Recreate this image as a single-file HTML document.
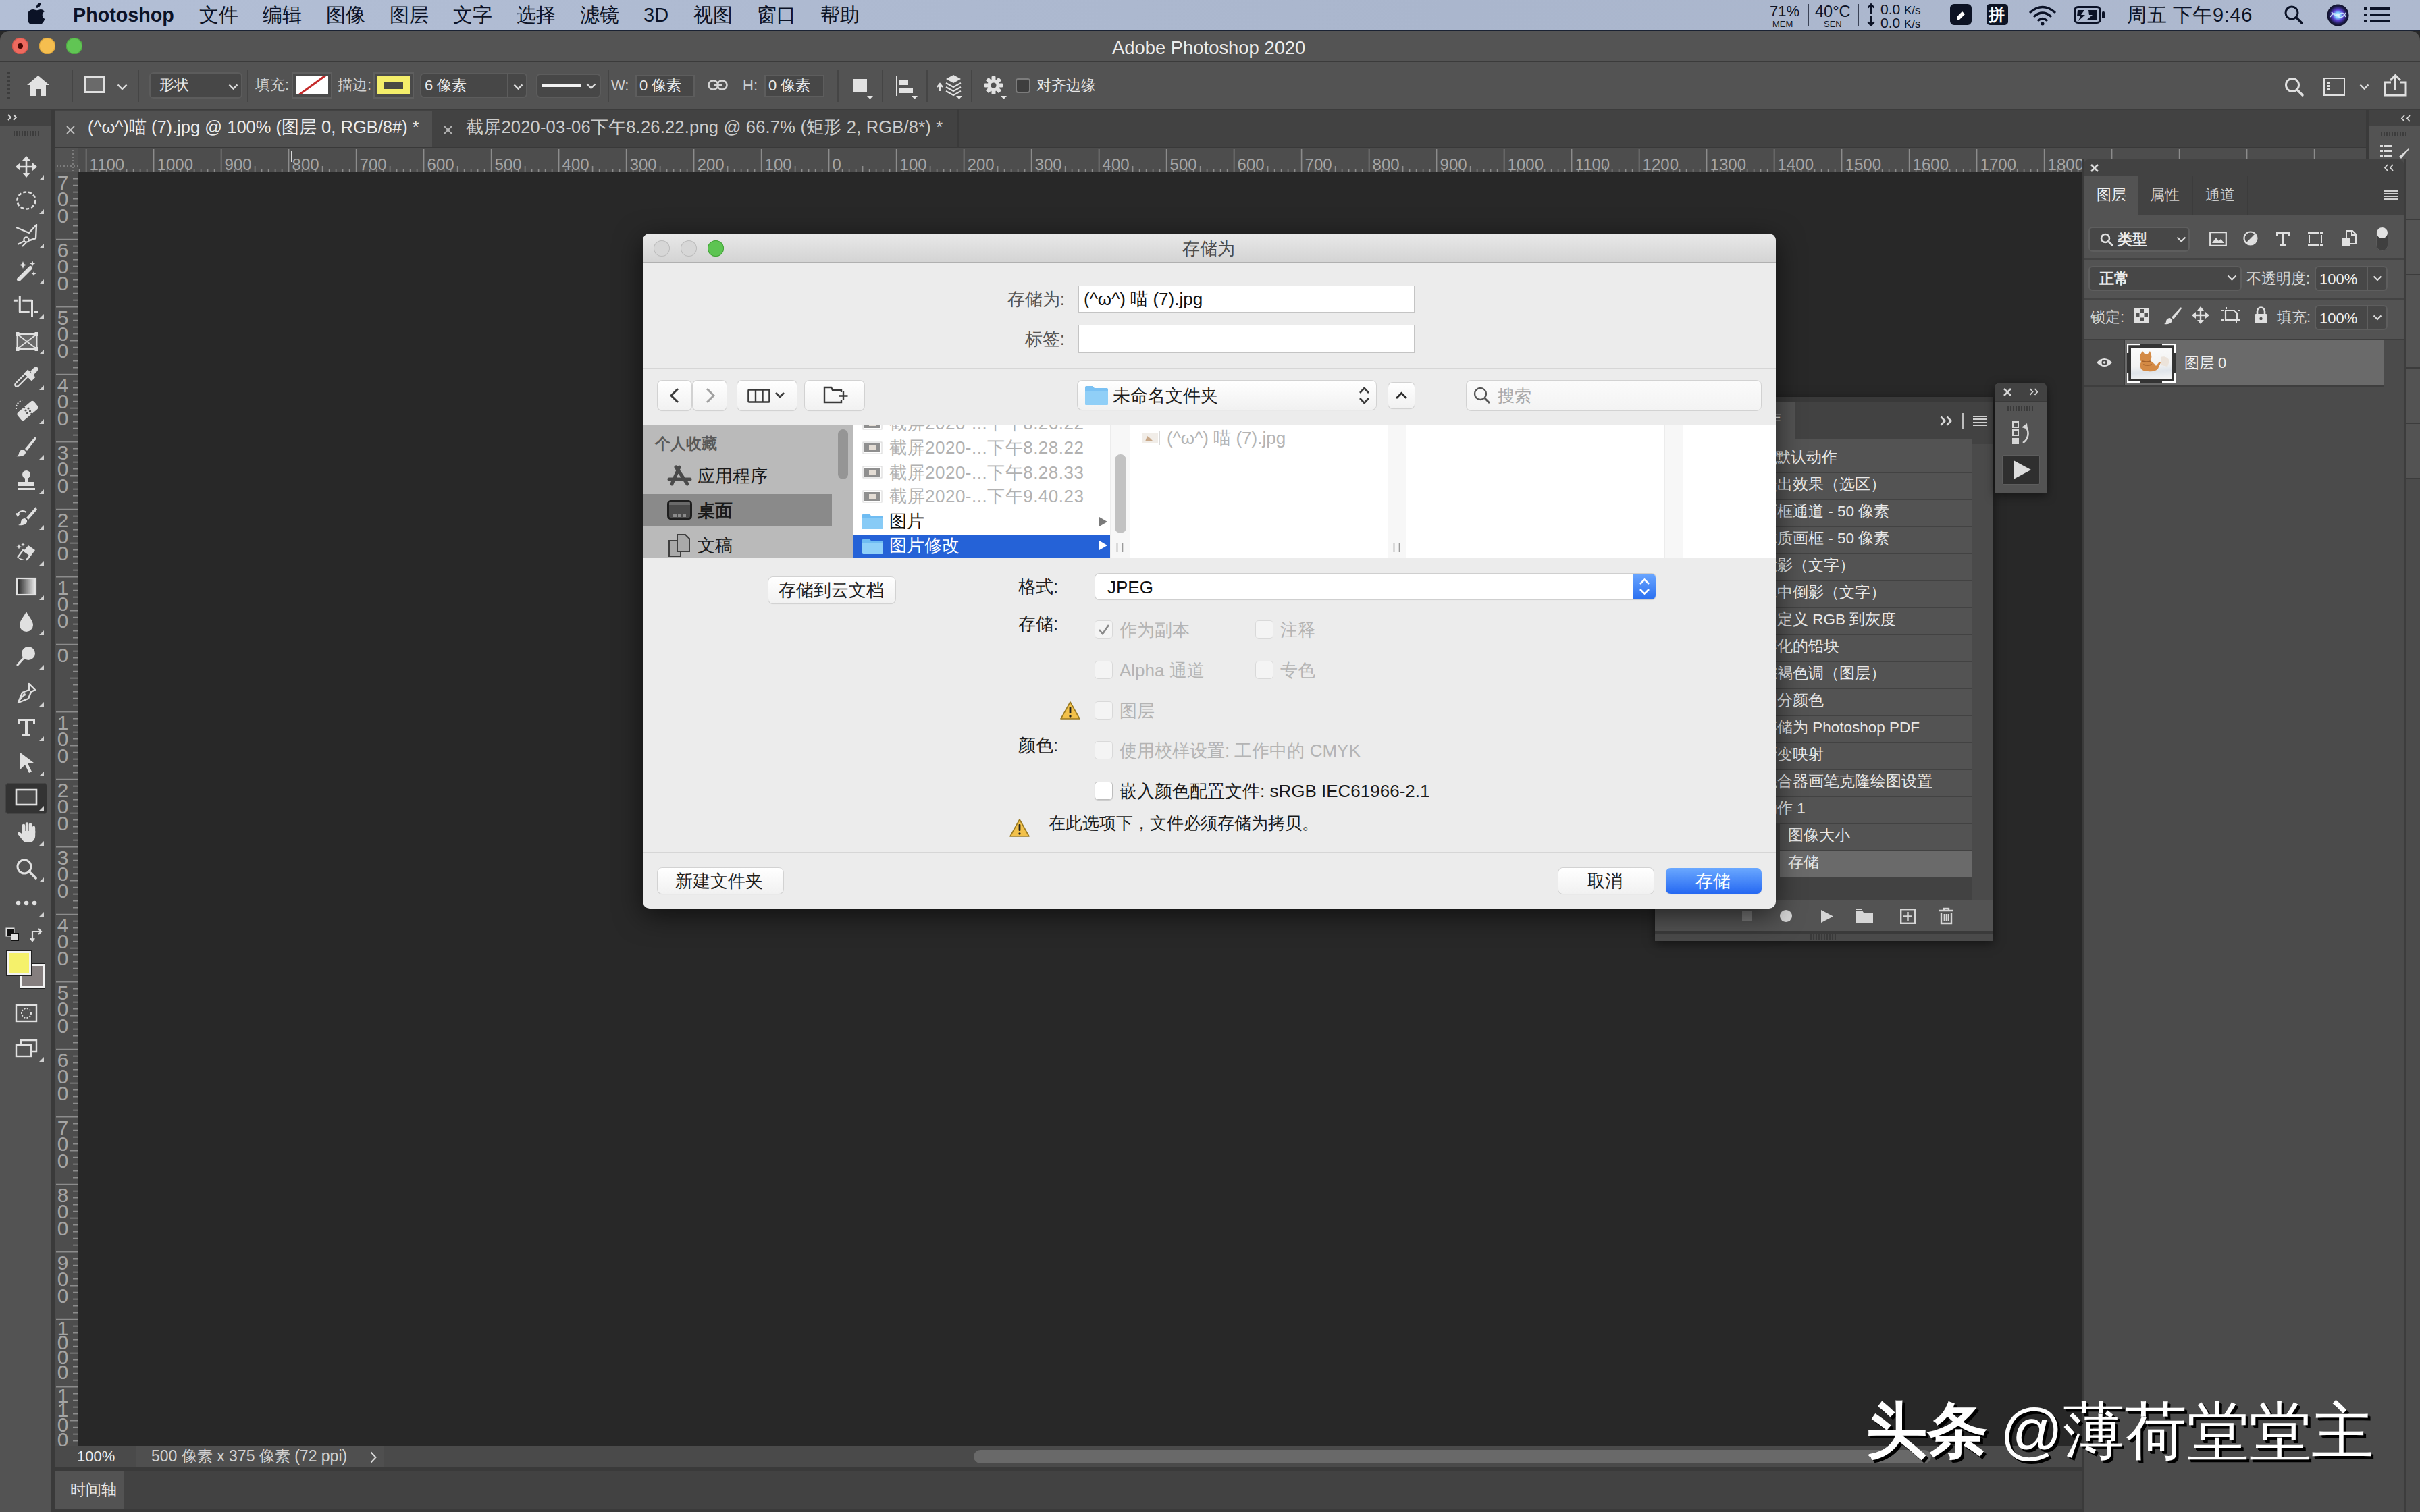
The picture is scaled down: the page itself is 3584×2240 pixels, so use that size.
<!DOCTYPE html>
<html><head><meta charset="utf-8">
<style>
html,body{margin:0;padding:0;width:3584px;height:2240px;overflow:hidden;background:#282828;font-family:"Liberation Sans",sans-serif;}
.a{position:absolute;}
.t{position:absolute;white-space:nowrap;line-height:1;}
/* menubar */
#menubar{left:0;top:0;width:3584px;height:44px;background:linear-gradient(90deg,#b3bfd6,#aab6cd 60%,#aeb9cf);}
#menubar .m{position:absolute;top:7px;font-size:29px;color:#0b1226;line-height:30px;}
/* ps window */
#titlebar{left:0;top:46px;width:3584px;height:45px;background:#545454;border-radius:14px 14px 0 0;}
#optbar{left:0;top:92px;width:3584px;height:70px;background:#535353;}
.sep{position:absolute;width:2px;background:#454545;}
.ddn{position:absolute;background:#474747;border:2px solid #5c5c5c;border-radius:6px;box-sizing:border-box;}
.ot{position:absolute;font-size:26px;color:#d9d9d9;line-height:1;white-space:nowrap;}
#toolbar{left:0;top:162px;width:76px;height:2078px;background:#535353;}
#tabbar{left:82px;top:162px;width:3422px;height:58px;background:#424242;}
#hruler{left:82px;top:220px;width:3422px;height:35px;background:#4d4d4d;}
#vruler{left:82px;top:255px;width:34px;height:1887px;background:#4d4d4d;}
#status{left:82px;top:2142px;width:3004px;height:32px;background:#4a4a4a;}
#timeline{left:82px;top:2180px;width:3004px;height:60px;background:#424242;}
#layers{left:3086px;top:236px;width:474px;height:2004px;background:#4b4b4b;box-shadow:-2px 0 0 #3a3a3a;}
#dock{left:3507px;top:163px;width:77px;height:2077px;background:#535353;}
#actions{left:2451px;top:588px;width:501px;height:806px;background:#535353;box-shadow:0 4px 14px rgba(0,0,0,.5);}
#mini{left:2954px;top:567px;width:77px;height:163px;background:#535353;border-radius:8px 8px 0 0;box-shadow:0 4px 14px rgba(0,0,0,.5);}
#dialog{left:952px;top:346px;width:1678px;height:1000px;background:#ececec;border-radius:10px;overflow:hidden;box-shadow:0 10px 40px rgba(0,0,0,.6);}
.dt{position:absolute;font-size:26px;line-height:1;white-space:nowrap;color:#1e1e1e;}
</style></head>
<body>
<div id="menubar" class="a">
<svg class="a" style="left:41px;top:4px" width="28" height="32" viewBox="0 0 28 32"><path fill="#0b1226" d="M19.5 0c.3 2-.5 4-1.7 5.4-1.2 1.4-3.1 2.5-5 2.3-.3-1.9.6-3.9 1.7-5.2C15.8 1.1 17.9.1 19.5 0zM26 23.3c-.8 1.8-1.2 2.6-2.2 4.2-1.4 2.2-3.4 4.9-5.9 4.9-2.2 0-2.8-1.4-5.8-1.4-3 0-3.7 1.5-5.9 1.4-2.5 0-4.4-2.4-5.8-4.6C-3.5 21.6-.4 13.5 3.6 11.2c1.4-.8 3-1.3 4.6-1.3 2.3 0 3.7 1.3 5.6 1.3 1.8 0 2.9-1.3 5.6-1.3 2 0 4.1 1.1 5.6 3-4.9 2.7-4.1 9.7 1 11.4z"/></svg>
<div class="m" style="left:108px;font-weight:bold;font-size:28.7px">Photoshop</div>
<div class="m" style="left:295px">文件</div>
<div class="m" style="left:389px">编辑</div>
<div class="m" style="left:483px">图像</div>
<div class="m" style="left:577px">图层</div>
<div class="m" style="left:671px">文字</div>
<div class="m" style="left:765px">选择</div>
<div class="m" style="left:859px">滤镜</div>
<div class="m" style="left:953px">3D</div>
<div class="m" style="left:1027px">视图</div>
<div class="m" style="left:1121px">窗口</div>
<div class="m" style="left:1215px">帮助</div>
<div class="t" style="left:2621px;top:6px;font-size:22px;color:#0b1226">71%</div>
<div class="t" style="left:2625px;top:29px;font-size:13px;color:#0b1226">MEM</div>
<div class="a" style="left:2678px;top:6px;width:1px;height:32px;background:#3a4256"></div>
<div class="t" style="left:2688px;top:6px;font-size:23.5px;color:#0b1226">40°C</div>
<div class="t" style="left:2701px;top:29px;font-size:13px;color:#0b1226">SEN</div>
<div class="a" style="left:2752px;top:6px;width:1px;height:32px;background:#3a4256"></div>
<svg class="a" style="left:2765px;top:5px" width="12" height="15" viewBox="0 0 12 15"><path d="M6 15V3M1.5 6.5L6 1.5l4.5 5" stroke="#0b1226" stroke-width="2.6" fill="none"/></svg>
<svg class="a" style="left:2765px;top:24px" width="12" height="15" viewBox="0 0 12 15"><path d="M6 0v12M1.5 8.5L6 13.5l4.5-5" stroke="#0b1226" stroke-width="2.6" fill="none"/></svg>
<div class="t" style="left:2785px;top:3px;font-size:21px;color:#0b1226">0.0 <span style="font-size:17px">K/s</span></div>
<div class="t" style="left:2785px;top:23px;font-size:21px;color:#0b1226">0.0 <span style="font-size:17px">K/s</span></div>
<div class="a" style="left:2888px;top:6px;width:32px;height:31px;background:#0d1324;border-radius:6px"></div>
<svg class="a" style="left:2894px;top:12px" width="20" height="20" viewBox="0 0 20 20"><path fill="#fff" d="M4 13l8-8 4 4-8 8H4z"/></svg>
<div class="a" style="left:2942px;top:6px;width:32px;height:31px;background:#0d1324;border-radius:5px"></div>
<div class="t" style="left:2945px;top:10px;font-size:24px;color:#fff;font-weight:bold">拼</div>
<svg class="a" style="left:3004px;top:8px" width="42" height="30" viewBox="0 0 42 30"><path fill="none" stroke="#0b1226" stroke-width="3.2" stroke-linecap="round" d="M3 10Q21-5 39 10M9 16Q21 6 33 16M15 22Q21 17 27 22"/><circle cx="21" cy="27" r="2.5" fill="#0b1226"/></svg>
<svg class="a" style="left:3071px;top:9px" width="47" height="26" viewBox="0 0 47 26"><rect x="1.5" y="1.5" width="38" height="23" rx="5" fill="none" stroke="#0b1226" stroke-width="3"/><rect x="42" y="8" width="4" height="10" rx="1.5" fill="#0b1226"/><path fill="#0b1226" d="M6 6h10l-5 7h6l-10 9 3-7H5zM22 6h12v14H20l8-7h-5z"/></svg>
<div class="m" style="left:3150px;top:7px;font-size:29px;letter-spacing:.6px">周五 下午9:46</div>
<svg class="a" style="left:3382px;top:7px" width="30" height="30" viewBox="0 0 30 30"><circle cx="12" cy="12" r="9" fill="none" stroke="#0b1226" stroke-width="3"/><path d="M19 19l8 8" stroke="#0b1226" stroke-width="3.4" stroke-linecap="round"/></svg>
<svg class="a" style="left:3446px;top:6px" width="33" height="33" viewBox="0 0 33 33"><defs><radialGradient id="sg" cx="50%" cy="50%" r="50%"><stop offset="0" stop-color="#ffffff"/><stop offset=".25" stop-color="#7fd0ff"/><stop offset=".5" stop-color="#5a3fd0"/><stop offset=".8" stop-color="#1c1b4a"/><stop offset="1" stop-color="#0d0f24"/></radialGradient></defs><circle cx="16.5" cy="16.5" r="16" fill="url(#sg)"/><path d="M5 19q6-9 11-2t12-4M7 12q7 8 12 3t9 4" stroke="#d9f3ff" stroke-width="1.6" fill="none" opacity=".85"/></svg>
<svg class="a" style="left:3501px;top:10px" width="40" height="24" viewBox="0 0 40 24"><g fill="#0b1226"><rect x="0" y="1" width="5" height="4"/><rect x="0" y="10" width="5" height="4"/><rect x="0" y="19" width="5" height="4"/><rect x="9" y="1" width="30" height="4"/><rect x="9" y="10" width="30" height="4"/><rect x="9" y="19" width="30" height="4"/></g></svg>
</div>
<div class="a" style="left:0;top:44px;width:3584px;height:2px;background:#1a2233"></div>
<div id="titlebar" class="a">
<div class="a" style="left:18px;top:10px;width:24px;height:24px;border-radius:50%;background:#ee6a5f;box-shadow:inset 0 0 0 1px #d4554b"></div>
<div class="a" style="left:26px;top:18px;width:8px;height:8px;border-radius:50%;background:#460804"></div>
<div class="a" style="left:58px;top:10px;width:24px;height:24px;border-radius:50%;background:#f5be4f;box-shadow:inset 0 0 0 1px #d9a23a"></div>
<div class="a" style="left:98px;top:10px;width:24px;height:24px;border-radius:50%;background:#61c554;box-shadow:inset 0 0 0 1px #4ea842"></div>
<div class="t" style="left:1647px;top:11px;font-size:27.4px;color:#ececec;line-height:27px">Adobe Photoshop 2020</div>
</div>
<div class="a" style="left:0;top:91px;width:3584px;height:1px;background:#3b3b3b"></div>
<div id="optbar" class="a">
<div class="a" style="left:11px;top:15px;width:4px;height:40px;background:repeating-linear-gradient(#3c3c3c 0 3px,transparent 3px 6px)"></div>
<svg class="a" style="left:40px;top:20px" width="33" height="30" viewBox="0 0 33 30"><path fill="#e2e2e2" d="M16.5 0L0 14h5v16h8V20h7v10h8V14h5z"/></svg>
<div class="sep" style="left:106px;top:11px;height:48px"></div>
<div class="a" style="left:124px;top:21px;width:31px;height:25px;box-sizing:border-box;border:3px solid #e0e0e0;background:#6a6a6a"></div>
<svg class="a" style="left:173px;top:32px" width="16" height="10" viewBox="0 0 16 10"><path d="M1.5 1.5l6.5 6.5 6.5-6.5" stroke="#dcdcdc" stroke-width="2.4" fill="none"/></svg>
<div class="sep" style="left:204px;top:11px;height:48px"></div>
<div class="ddn" style="left:221px;top:15px;width:138px;height:39px"></div>
<div class="ot" style="left:236px;top:23px;font-size:22px;color:#e6e6e6">形状</div>
<svg class="a" style="left:338px;top:32px" width="15" height="10" viewBox="0 0 15 10"><path d="M1.5 1.5l6 6 6-6" stroke="#dcdcdc" stroke-width="2.4" fill="none"/></svg>
<div class="sep" style="left:366px;top:11px;height:48px"></div>
<div class="ot" style="left:378px;top:23px;font-size:22px;color:#d0d0d0">填充:</div>
<div class="a" style="left:432px;top:15px;width:60px;height:39px;box-sizing:border-box;border:2px solid #5f5f5f;background:#4a4a4a"></div>
<div class="a" style="left:438px;top:21px;width:48px;height:27px;background:#fff;overflow:hidden"><div class="a" style="left:-4px;top:12px;width:56px;height:3px;background:#c42a2a;transform:rotate(-36deg)"></div></div>
<div class="ot" style="left:500px;top:23px;font-size:22px;color:#d0d0d0">描边:</div>
<div class="a" style="left:553px;top:15px;width:60px;height:39px;box-sizing:border-box;border:2px solid #5f5f5f;background:#4a4a4a"></div>
<div class="a" style="left:559px;top:21px;width:48px;height:27px;background:#f4ee6a"></div>
<div class="a" style="left:568px;top:30px;width:29px;height:10px;background:#4a4a44"></div>
<div class="a" style="left:571px;top:33px;width:23px;height:4px;background:#f4ee6a;opacity:.0"></div>
<div class="ddn" style="left:622px;top:16px;width:159px;height:37px"></div>
<div class="a" style="left:751px;top:18px;width:2px;height:33px;background:#5c5c5c"></div>
<div class="ot" style="left:629px;top:24px;font-size:22px;color:#ececec">6 像素</div>
<svg class="a" style="left:760px;top:32px" width="15" height="10" viewBox="0 0 15 10"><path d="M1.5 1.5l6 6 6-6" stroke="#dcdcdc" stroke-width="2.4" fill="none"/></svg>
<div class="ddn" style="left:794px;top:17px;width:96px;height:36px"></div>
<div class="a" style="left:802px;top:33px;width:58px;height:4px;background:#f2f2f2"></div>
<svg class="a" style="left:868px;top:31px" width="15" height="10" viewBox="0 0 15 10"><path d="M1.5 1.5l6 6 6-6" stroke="#dcdcdc" stroke-width="2.4" fill="none"/></svg>
<div class="sep" style="left:900px;top:11px;height:48px"></div>
<div class="ot" style="left:905px;top:24px;font-size:22px;color:#d0d0d0">W:</div>
<div class="a" style="left:941px;top:19px;width:88px;height:33px;box-sizing:border-box;border:2px solid #5d5d5d;background:#474747"></div>
<div class="ot" style="left:947px;top:24px;font-size:22px;color:#ececec">0 像素</div>
<svg class="a" style="left:1048px;top:118px;top:26px" width="30" height="16" viewBox="0 0 30 16"><g fill="none" stroke="#d6d6d6" stroke-width="2.6"><rect x="1.5" y="1.5" width="14" height="13" rx="6.5"/><rect x="14.5" y="1.5" width="14" height="13" rx="6.5"/></g><rect x="9" y="6.7" width="12" height="2.6" fill="#d6d6d6"/></svg>
<div class="ot" style="left:1100px;top:24px;font-size:22px;color:#d0d0d0">H:</div>
<div class="a" style="left:1132px;top:19px;width:89px;height:33px;box-sizing:border-box;border:2px solid #5d5d5d;background:#474747"></div>
<div class="ot" style="left:1138px;top:24px;font-size:22px;color:#ececec">0 像素</div>
<div class="sep" style="left:1240px;top:11px;height:48px"></div>
<div class="a" style="left:1264px;top:25px;width:20px;height:20px;background:#e2e2e2"></div>
<svg class="a" style="left:1284px;top:50px" width="9" height="5"><path d="M0 0h9L4.5 5z" fill="#e6e6e6"/></svg>
<div class="sep" style="left:1306px;top:11px;height:48px"></div>
<div class="a" style="left:1327px;top:20px;width:2px;height:30px;background:#e2e2e2"></div>
<div class="a" style="left:1331px;top:26px;width:14px;height:8px;background:#e2e2e2"></div>
<div class="a" style="left:1331px;top:38px;width:21px;height:8px;background:#e2e2e2"></div>
<svg class="a" style="left:1350px;top:50px" width="9" height="5"><path d="M0 0h9L4.5 5z" fill="#e6e6e6"/></svg>
<div class="sep" style="left:1372px;top:11px;height:48px"></div>
<svg class="a" style="left:1386px;top:18px" width="40" height="36" viewBox="0 0 40 36"><path d="M6 15v10M2 19l4-5 4 5" stroke="#e2e2e2" stroke-width="2.2" fill="none"/><path d="M26 1l11 6-11 6-11-6z" fill="#e2e2e2"/><path d="M15 13l11 6 11-6M15 19l11 6 11-6M15 25l11 6 11-6" stroke="#e2e2e2" stroke-width="2" fill="none"/></svg>
<svg class="a" style="left:1416px;top:50px" width="9" height="5"><path d="M0 0h9L4.5 5z" fill="#e6e6e6"/></svg>
<div class="sep" style="left:1438px;top:11px;height:48px"></div>
<svg class="a" style="left:1458px;top:21px" width="27" height="27" viewBox="0 0 27 27"><g fill="#e2e2e2"><circle cx="13.5" cy="13.5" r="9"/><rect x="10.5" y="0" width="6" height="27" rx="1"/><rect x="0" y="10.5" width="27" height="6" rx="1"/><rect x="10.5" y="0" width="6" height="27" rx="1" transform="rotate(45 13.5 13.5)"/><rect x="10.5" y="0" width="6" height="27" rx="1" transform="rotate(-45 13.5 13.5)"/></g><circle cx="13.5" cy="13.5" r="4" fill="#535353"/></svg>
<svg class="a" style="left:1482px;top:50px" width="9" height="5"><path d="M0 0h9L4.5 5z" fill="#e6e6e6"/></svg>
<div class="a" style="left:1504px;top:24px;width:22px;height:22px;box-sizing:border-box;border:2px solid #7c7c7c;border-radius:4px;background:#3e3e3e"></div>
<div class="ot" style="left:1535px;top:24px;font-size:22px;color:#e6e6e6">对齐边缘</div>
<svg class="a" style="left:3383px;top:22px" width="30" height="30" viewBox="0 0 30 30"><circle cx="12" cy="12" r="9.5" fill="none" stroke="#e0e0e0" stroke-width="3"/><path d="M19 19l8 8" stroke="#e0e0e0" stroke-width="3.4" stroke-linecap="round"/></svg>
<div class="a" style="left:3441px;top:23px;width:32px;height:27px;box-sizing:border-box;border:2.5px solid #e0e0e0"></div>
<div class="a" style="left:3446px;top:29px;width:4px;height:14px;background:repeating-linear-gradient(#e0e0e0 0 3px,transparent 3px 5px)"></div>
<svg class="a" style="left:3494px;top:32px" width="15" height="10" viewBox="0 0 15 10"><path d="M1.5 1.5l6 6 6-6" stroke="#dcdcdc" stroke-width="2.4" fill="none"/></svg>
<svg class="a" style="left:3530px;top:17px" width="35" height="34" viewBox="0 0 35 34"><path d="M11 13H2v19h31V13h-9" fill="none" stroke="#e0e0e0" stroke-width="3"/><path d="M17.5 24V3M10 10l7.5-7.5L25 10" fill="none" stroke="#e0e0e0" stroke-width="3"/></svg>
</div>
<div class="a" style="left:0;top:162px;width:3584px;height:2078px;background:#3a3a3a"></div>
<div id="toolbar" class="a">
<div class="a" style="left:0;top:0;width:76px;height:24px;background:#424242"></div>
<svg class="a" style="left:11px;top:7px" width="16" height="10" viewBox="0 0 16 10"><path d="M1 1l4 4-4 4M9 1l4 4-4 4" stroke="#dcdcdc" stroke-width="1.8" fill="none"/></svg>
<div class="a" style="left:4px;top:24px;width:1px;height:2054px;background:#4a4a4a"></div>
<div class="a" style="left:20px;top:32px;width:38px;height:7px;background:repeating-linear-gradient(90deg,#3c3c3c 0 2px,transparent 2px 4px)"></div>
<svg class="a" style="left:23px;top:69px" width="32" height="32" viewBox="0 0 32 32"><path d="M16 2v28M2 16h28" stroke="#e0e0e0" stroke-width="2.6"/><path d="M16 0l-6 7h12zM16 32l-6-7h12zM0 16l7-6v12zM32 16l-7-6v12z" fill="#e0e0e0"/></svg>
<svg class="a" style="left:58px;top:98px" width="7" height="7"><path d="M7 0v7H0z" fill="#cfcfcf"/></svg>
<svg class="a" style="left:23px;top:120px" width="32" height="30" viewBox="0 0 32 30"><ellipse cx="16" cy="15" rx="13.5" ry="12.5" fill="none" stroke="#e0e0e0" stroke-width="2.6" stroke-dasharray="5 3"/></svg>
<svg class="a" style="left:58px;top:148px" width="7" height="7"><path d="M7 0v7H0z" fill="#cfcfcf"/></svg>
<svg class="a" style="left:23px;top:170px" width="34" height="34" viewBox="0 0 34 34"><path d="M1 5l19 8L31 1l-1 20-12 4" fill="none" stroke="#e0e0e0" stroke-width="2.4" stroke-linejoin="round"/><circle cx="16" cy="23" r="3.6" fill="#535353" stroke="#e0e0e0" stroke-width="2.2"/><path d="M13 25l-10 5M16 27l-6 6" stroke="#e0e0e0" stroke-width="2.2"/></svg>
<svg class="a" style="left:58px;top:199px" width="7" height="7"><path d="M7 0v7H0z" fill="#cfcfcf"/></svg>
<svg class="a" style="left:23px;top:223px" width="32" height="32" viewBox="0 0 32 32"><path d="M5 29L22 12" stroke="#e0e0e0" stroke-width="6" stroke-linecap="round"/><path d="M11 2l1.5 4 4 1.5-4 1.5L11 13 9.5 9 5.5 7.5l4-1.5zM25 1l1.2 3 3 1.2-3 1.2L25 10l-1.2-3.6-3-1.2 3-1.2zM27 17l1 2.5 2.5 1-2.5 1L27 24l-1-2.5-2.5-1 2.5-1z" fill="#e0e0e0"/></svg>
<svg class="a" style="left:58px;top:252px" width="7" height="7"><path d="M7 0v7H0z" fill="#cfcfcf"/></svg>
<svg class="a" style="left:15px;top:274px" width="46" height="36" viewBox="0 0 46 36"><path d="M4.9 9.3H10.9M14.3 2.4V26H28.7M18.3 9.3H32.5V34M36 26H41.6" fill="none" stroke="#e0e0e0" stroke-width="3" stroke-linejoin="round"/></svg>
<svg class="a" style="left:58px;top:303px" width="7" height="7"><path d="M7 0v7H0z" fill="#cfcfcf"/></svg>
<svg class="a" style="left:15px;top:328px" width="46" height="32" viewBox="0 0 46 32"><rect x="10.5" y="5" width="29" height="22" fill="#6a6a6a" stroke="#e0e0e0" stroke-width="2"/><path d="M10.5 5l29 22M39.5 5l-29 22" stroke="#e0e0e0" stroke-width="1.8"/><g fill="#e0e0e0"><rect x="8" y="2" width="5.5" height="6"/><rect x="36.5" y="2" width="5.5" height="6"/><rect x="8" y="24" width="5.5" height="6"/><rect x="36.5" y="24" width="5.5" height="6"/></g></svg>
<svg class="a" style="left:58px;top:356px" width="7" height="7"><path d="M7 0v7H0z" fill="#cfcfcf"/></svg>
<svg class="a" style="left:15px;top:378px" width="46" height="36" viewBox="0 0 46 36"><path d="M29 15L13 31c-2 2-4 2-5 1s-1-3 1-5l16-16" fill="none" stroke="#e0e0e0" stroke-width="2.2"/><rect x="21" y="12" width="16" height="8" transform="rotate(45 29 16)" fill="#e0e0e0"/><path d="M30 10l5-5c2-2 5-2 6 0s0 4-2 6l-5 5z" fill="#e0e0e0"/></svg>
<svg class="a" style="left:58px;top:409px" width="7" height="7"><path d="M7 0v7H0z" fill="#cfcfcf"/></svg>
<svg class="a" style="left:22px;top:429px" width="36" height="34" viewBox="0 0 36 34"><rect x="3" y="10" width="32" height="15" rx="4" transform="rotate(-40 19 17.5)" fill="#e0e0e0"/><g fill="#535353"><circle cx="16" cy="17" r="1.6"/><circle cx="20" cy="14" r="1.6"/><circle cx="18.5" cy="21" r="1.6"/><circle cx="22.5" cy="18" r="1.6"/><circle cx="14" cy="13" r="1.3"/><circle cx="24.5" cy="22" r="1.3"/></g><path d="M2 15q-1-9 9-13" fill="none" stroke="#e0e0e0" stroke-width="2" stroke-dasharray="2 2.2"/></svg>
<svg class="a" style="left:58px;top:459px" width="7" height="7"><path d="M7 0v7H0z" fill="#cfcfcf"/></svg>
<svg class="a" style="left:23px;top:483px" width="32" height="32" viewBox="0 0 32 32"><path d="M29 2L14 20l3 3L31 5z" fill="#e0e0e0"/><path d="M12 21c-5 0-7 4-7 6s-2 3-4 4c7 1 15-1 14-7z" fill="#e0e0e0"/></svg>
<svg class="a" style="left:58px;top:512px" width="7" height="7"><path d="M7 0v7H0z" fill="#cfcfcf"/></svg>
<svg class="a" style="left:23px;top:534px" width="32" height="32" viewBox="0 0 32 32"><circle cx="16" cy="7" r="6" fill="#e0e0e0"/><path d="M14 12h4v6h10v6H4v-6h10z" fill="#e0e0e0"/><rect x="3" y="27" width="26" height="3" fill="#e0e0e0"/></svg>
<svg class="a" style="left:58px;top:563px" width="7" height="7"><path d="M7 0v7H0z" fill="#cfcfcf"/></svg>
<svg class="a" style="left:22px;top:587px" width="34" height="32" viewBox="0 0 34 32"><path d="M31 2L17 18l3 3L33 6z" fill="#e0e0e0"/><path d="M15 19c-5 0-6 4-6 6s-2 3-4 4c7 1 14-1 13-7z" fill="#e0e0e0"/><path d="M3 14q6-9 14-4" fill="none" stroke="#e0e0e0" stroke-width="2.2"/><path d="M1 11l3 6 4-5z" fill="#e0e0e0"/></svg>
<svg class="a" style="left:58px;top:616px" width="7" height="7"><path d="M7 0v7H0z" fill="#cfcfcf"/></svg>
<svg class="a" style="left:22px;top:641px" width="34" height="30" viewBox="0 0 34 30"><path d="M20 5l10 7-11 15H9l-5-4z" fill="#e0e0e0"/><path d="M4 23l8-11 10 7-5 8" fill="#535353" stroke="#e0e0e0" stroke-width="2.2"/><path d="M6 3l1 3 3 1-3 1-1 3-1-3-3-1 3-1zM12 1l.8 2 2 .8-2 .8-.8 2-.8-2-2-.8 2-.8z" fill="#e0e0e0"/></svg>
<svg class="a" style="left:58px;top:669px" width="7" height="7"><path d="M7 0v7H0z" fill="#cfcfcf"/></svg>
<svg class="a" style="left:23px;top:693px" width="32" height="28" viewBox="0 0 32 28"><defs><linearGradient id="gr1" x1="0" x2="1"><stop offset="0" stop-color="#202020"/><stop offset="1" stop-color="#f0f0f0"/></linearGradient></defs><rect x="2" y="2" width="28" height="24" fill="url(#gr1)" stroke="#e0e0e0" stroke-width="2.2"/></svg>
<svg class="a" style="left:58px;top:720px" width="7" height="7"><path d="M7 0v7H0z" fill="#cfcfcf"/></svg>
<svg class="a" style="left:26px;top:743px" width="26" height="32" viewBox="0 0 26 32"><path d="M13 1C10 8 3 14 3 21a10 10 0 0 0 20 0c0-7-7-13-10-20z" fill="#e0e0e0"/></svg>
<svg class="a" style="left:58px;top:772px" width="7" height="7"><path d="M7 0v7H0z" fill="#cfcfcf"/></svg>
<svg class="a" style="left:23px;top:794px" width="32" height="32" viewBox="0 0 32 32"><circle cx="19" cy="12" r="10" fill="#e0e0e0"/><path d="M13 18L3 29" stroke="#e0e0e0" stroke-width="3.2" stroke-linecap="round"/></svg>
<svg class="a" style="left:58px;top:823px" width="7" height="7"><path d="M7 0v7H0z" fill="#cfcfcf"/></svg>
<svg class="a" style="left:24px;top:849px" width="30" height="32" viewBox="0 0 30 32"><path d="M19 2l9 9-6 3-4 10-15 6 6-15 10-4z" fill="none" stroke="#e0e0e0" stroke-width="2.4" stroke-linejoin="round"/><circle cx="12" cy="18" r="2" fill="#e0e0e0"/><path d="M3 29l8-10" stroke="#e0e0e0" stroke-width="2"/></svg>
<svg class="a" style="left:58px;top:878px" width="7" height="7"><path d="M7 0v7H0z" fill="#cfcfcf"/></svg>
<svg class="a" style="left:24px;top:901px" width="30" height="30" viewBox="0 0 30 30"><path d="M2 2h26v8h-3V5H17v20h4v3H9v-3h4V5H5v5H2z" fill="#e0e0e0"/></svg>
<svg class="a" style="left:58px;top:929px" width="7" height="7"><path d="M7 0v7H0z" fill="#cfcfcf"/></svg>
<svg class="a" style="left:26px;top:952px" width="26" height="32" viewBox="0 0 26 32"><path d="M4 1l20 15-9 1 6 12-4 2-6-12-7 7z" fill="#e0e0e0"/></svg>
<svg class="a" style="left:58px;top:981px" width="7" height="7"><path d="M7 0v7H0z" fill="#cfcfcf"/></svg>
<div class="a" style="left:8px;top:998px;width:62px;height:46px;border-radius:5px;background:#333;box-shadow:inset 0 0 0 1px #454545"></div>
<svg class="a" style="left:22px;top:1006px" width="34" height="26" viewBox="0 0 34 26"><rect x="2" y="2" width="30" height="22" fill="#4a4a4a" stroke="#e0e0e0" stroke-width="2.6"/></svg>
<svg class="a" style="left:58px;top:1032px" width="7" height="7"><path d="M7 0v7H0z" fill="#cfcfcf"/></svg>
<svg class="a" style="left:24px;top:1055px" width="31" height="32" viewBox="0 0 31 32"><g stroke="#e0e0e0" stroke-width="4.4" stroke-linecap="round"><path d="M11 16V6M16 15V3.5M21 15V4.5M26 17V9"/></g><path d="M8.8 14H28.2v7c0 6-4 10-9 10h-3c-4 0-6-2-8-5L2.5 19c-1.2-2 1-4 3-3l3.3 2.5z" fill="#e0e0e0"/></svg>
<svg class="a" style="left:58px;top:1084px" width="7" height="7"><path d="M7 0v7H0z" fill="#cfcfcf"/></svg>
<svg class="a" style="left:23px;top:1109px" width="32" height="32" viewBox="0 0 32 32"><circle cx="13" cy="13" r="10" fill="none" stroke="#e0e0e0" stroke-width="3"/><path d="M20 20l10 10" stroke="#e0e0e0" stroke-width="3.6" stroke-linecap="round"/></svg>
<svg class="a" style="left:58px;top:1138px" width="7" height="7"><path d="M7 0v7H0z" fill="#cfcfcf"/></svg>
<svg class="a" style="left:22px;top:1172px" width="34" height="8" viewBox="0 0 34 8"><g fill="#e0e0e0"><circle cx="5" cy="4" r="3.3"/><circle cx="17" cy="4" r="3.3"/><circle cx="29" cy="4" r="3.3"/></g></svg>
<svg class="a" style="left:58px;top:1189px" width="7" height="7"><path d="M7 0v7H0z" fill="#cfcfcf"/></svg>
<div class="a" style="left:10px;top:1214px;width:10px;height:10px;background:#111;box-shadow:0 0 0 1.5px #e0e0e0"></div>
<div class="a" style="left:16px;top:1220px;width:10px;height:10px;background:#e0e0e0;border:1px solid #111"></div>
<svg class="a" style="left:44px;top:1212px" width="22" height="22" viewBox="0 0 22 22"><path d="M4 20V6h13M13 2l4 4-4 4M1 16l3 4 3-4" fill="none" stroke="#e0e0e0" stroke-width="2.2"/></svg>
<div class="a" style="left:30px;top:1266px;width:36px;height:36px;box-sizing:border-box;background:#857e7e;border:3px solid #f2f2f2;box-shadow:0 0 0 1px #222"></div>
<div class="a" style="left:10px;top:1247px;width:36px;height:36px;box-sizing:border-box;background:#f5f16b;border:3px solid #f2f2f2;box-shadow:0 0 0 1px #222"></div>
<svg class="a" style="left:22px;top:1325px" width="34" height="28" viewBox="0 0 34 28"><rect x="2" y="2" width="30" height="24" fill="none" stroke="#e0e0e0" stroke-width="2.4"/><circle cx="17" cy="14" r="7" fill="none" stroke="#e0e0e0" stroke-width="2" stroke-dasharray="2 2.2"/></svg>
<svg class="a" style="left:22px;top:1377px" width="34" height="28" viewBox="0 0 34 28"><rect x="2" y="9" width="22" height="17" fill="#535353" stroke="#e0e0e0" stroke-width="2.4"/><path d="M9 9V2h23v17h-8" fill="none" stroke="#e0e0e0" stroke-width="2.4"/></svg>
<svg class="a" style="left:58px;top:1404px" width="7" height="7"><path d="M7 0v7H0z" fill="#cfcfcf"/></svg>
</div>
<div id="tabbar" class="a">
<div class="a" style="left:-82px;top:-1px;width:3584px;height:2px;background:#3c3c3c"></div>
<div class="a" style="left:0;top:56px;width:3422px;height:2px;background:#393939"></div>
<div class="a" style="left:0;top:2px;width:558px;height:54px;background:#505050"></div>
<svg class="a" style="left:16px;top:24px" width="13" height="13" viewBox="0 0 13 13"><path d="M1 1l11 11M12 1L1 12" stroke="#bdbdbd" stroke-width="1.8"/></svg>
<div class="t" style="left:48px;top:14px;font-size:25.5px;color:#ececec">(^ω^)喵 (7).jpg @ 100% (图层 0, RGB/8#) *</div>
<svg class="a" style="left:575px;top:24px" width="13" height="13" viewBox="0 0 13 13"><path d="M1 1l11 11M12 1L1 12" stroke="#b5b5b5" stroke-width="1.8"/></svg>
<div class="t" style="left:608px;top:14px;font-size:25.5px;letter-spacing:.2px;color:#cdcdcd">截屏2020-03-06下午8.26.22.png @ 66.7% (矩形 2, RGB/8*) *</div>
<div class="a" style="left:1336px;top:0;width:2px;height:58px;background:#3a3a3a"></div>
</div>
<div id="hruler" class="a">
<div class="a" style="left:0;top:0;width:34px;height:35px;background:#535353"></div>
<svg class="a" style="left:0;top:0" width="34" height="35"><path d="M26 2v32M2 26h32" stroke="#8a8a8a" stroke-width="1.5" stroke-dasharray="2 3"/></svg>
<svg class="a" style="left:0;top:0" width="3422" height="35"><path d="M35.6 30v5M45.6 1v34M55.6 30v5M65.6 30v5M75.6 30v5M85.6 30v5M95.6 26v9M105.6 30v5M115.6 30v5M125.6 30v5M135.6 30v5M145.6 1v34M155.6 30v5M165.6 30v5M175.6 30v5M185.6 30v5M195.6 26v9M205.6 30v5M215.6 30v5M225.6 30v5M235.6 30v5M245.6 1v34M255.6 30v5M265.6 30v5M275.6 30v5M285.6 30v5M295.6 26v9M305.6 30v5M315.6 30v5M325.6 30v5M335.6 30v5M345.6 1v34M355.6 30v5M365.6 30v5M375.6 30v5M385.6 30v5M395.6 26v9M405.6 30v5M415.6 30v5M425.6 30v5M435.6 30v5M445.6 1v34M455.6 30v5M465.6 30v5M475.6 30v5M485.6 30v5M495.6 26v9M505.6 30v5M515.6 30v5M525.6 30v5M535.6 30v5M545.6 1v34M555.6 30v5M565.6 30v5M575.6 30v5M585.6 30v5M595.6 26v9M605.6 30v5M615.6 30v5M625.6 30v5M635.6 30v5M645.6 1v34M655.6 30v5M665.6 30v5M675.6 30v5M685.6 30v5M695.6 26v9M705.6 30v5M715.6 30v5M725.6 30v5M735.6 30v5M745.6 1v34M755.6 30v5M765.6 30v5M775.6 30v5M785.6 30v5M795.6 26v9M805.6 30v5M815.6 30v5M825.6 30v5M835.6 30v5M845.6 1v34M855.6 30v5M865.6 30v5M875.6 30v5M885.6 30v5M895.6 26v9M905.6 30v5M915.6 30v5M925.6 30v5M935.6 30v5M945.6 1v34M955.6 30v5M965.6 30v5M975.6 30v5M985.6 30v5M995.6 26v9M1005.6 30v5M1015.6 30v5M1025.6 30v5M1035.6 30v5M1045.6 1v34M1055.6 30v5M1065.6 30v5M1075.6 30v5M1085.6 30v5M1095.6 26v9M1105.6 30v5M1115.6 30v5M1125.6 30v5M1135.6 30v5M1145.6 1v34M1155.6 30v5M1165.6 30v5M1175.6 30v5M1185.6 30v5M1195.6 26v9M1205.6 30v5M1215.6 30v5M1225.6 30v5M1235.6 30v5M1245.6 1v34M1255.6 30v5M1265.6 30v5M1275.6 30v5M1285.6 30v5M1295.6 26v9M1305.6 30v5M1315.6 30v5M1325.6 30v5M1335.6 30v5M1345.6 1v34M1355.6 30v5M1365.6 30v5M1375.6 30v5M1385.6 30v5M1395.6 26v9M1405.6 30v5M1415.6 30v5M1425.6 30v5M1435.6 30v5M1445.6 1v34M1455.6 30v5M1465.6 30v5M1475.6 30v5M1485.6 30v5M1495.6 26v9M1505.6 30v5M1515.6 30v5M1525.6 30v5M1535.6 30v5M1545.6 1v34M1555.6 30v5M1565.6 30v5M1575.6 30v5M1585.6 30v5M1595.6 26v9M1605.6 30v5M1615.6 30v5M1625.6 30v5M1635.6 30v5M1645.6 1v34M1655.6 30v5M1665.6 30v5M1675.6 30v5M1685.6 30v5M1695.6 26v9M1705.6 30v5M1715.6 30v5M1725.6 30v5M1735.6 30v5M1745.6 1v34M1755.6 30v5M1765.6 30v5M1775.6 30v5M1785.6 30v5M1795.6 26v9M1805.6 30v5M1815.6 30v5M1825.6 30v5M1835.6 30v5M1845.6 1v34M1855.6 30v5M1865.6 30v5M1875.6 30v5M1885.6 30v5M1895.6 26v9M1905.6 30v5M1915.6 30v5M1925.6 30v5M1935.6 30v5M1945.6 1v34M1955.6 30v5M1965.6 30v5M1975.6 30v5M1985.6 30v5M1995.6 26v9M2005.6 30v5M2015.6 30v5M2025.6 30v5M2035.6 30v5M2045.6 1v34M2055.6 30v5M2065.6 30v5M2075.6 30v5M2085.6 30v5M2095.6 26v9M2105.6 30v5M2115.6 30v5M2125.6 30v5M2135.6 30v5M2145.6 1v34M2155.6 30v5M2165.6 30v5M2175.6 30v5M2185.6 30v5M2195.6 26v9M2205.6 30v5M2215.6 30v5M2225.6 30v5M2235.6 30v5M2245.6 1v34M2255.6 30v5M2265.6 30v5M2275.6 30v5M2285.6 30v5M2295.6 26v9M2305.6 30v5M2315.6 30v5M2325.6 30v5M2335.6 30v5M2345.6 1v34M2355.6 30v5M2365.6 30v5M2375.6 30v5M2385.6 30v5M2395.6 26v9M2405.6 30v5M2415.6 30v5M2425.6 30v5M2435.6 30v5M2445.6 1v34M2455.6 30v5M2465.6 30v5M2475.6 30v5M2485.6 30v5M2495.6 26v9M2505.6 30v5M2515.6 30v5M2525.6 30v5M2535.6 30v5M2545.6 1v34M2555.6 30v5M2565.6 30v5M2575.6 30v5M2585.6 30v5M2595.6 26v9M2605.6 30v5M2615.6 30v5M2625.6 30v5M2635.6 30v5M2645.6 1v34M2655.6 30v5M2665.6 30v5M2675.6 30v5M2685.6 30v5M2695.6 26v9M2705.6 30v5M2715.6 30v5M2725.6 30v5M2735.6 30v5M2745.6 1v34M2755.6 30v5M2765.6 30v5M2775.6 30v5M2785.6 30v5M2795.6 26v9M2805.6 30v5M2815.6 30v5M2825.6 30v5M2835.6 30v5M2845.6 1v34M2855.6 30v5M2865.6 30v5M2875.6 30v5M2885.6 30v5M2895.6 26v9M2905.6 30v5M2915.6 30v5M2925.6 30v5M2935.6 30v5M2945.6 1v34M2955.6 30v5M2965.6 30v5M2975.6 30v5M2985.6 30v5M2995.6 26v9M3005.6 30v5M3015.6 30v5M3025.6 30v5M3035.6 30v5M3045.6 1v34M3055.6 30v5M3065.6 30v5M3075.6 30v5M3085.6 30v5M3095.6 26v9M3105.6 30v5M3115.6 30v5M3125.6 30v5M3135.6 30v5M3145.6 1v34M3155.6 30v5M3165.6 30v5M3175.6 30v5M3185.6 30v5M3195.6 26v9M3205.6 30v5M3215.6 30v5M3225.6 30v5M3235.6 30v5M3245.6 1v34M3255.6 30v5M3265.6 30v5M3275.6 30v5M3285.6 30v5M3295.6 26v9M3305.6 30v5M3315.6 30v5M3325.6 30v5M3335.6 30v5M3345.6 1v34M3355.6 30v5M3365.6 30v5M3375.6 30v5M3385.6 30v5M3395.6 26v9M3405.6 30v5M3415.6 30v5" stroke="#8c8c8c" stroke-width="1.6"/></svg>
<div class="t" style="left:50.6px;top:12px;font-size:24px;color:#a5a5a5">1100</div><div class="t" style="left:150.6px;top:12px;font-size:24px;color:#a5a5a5">1000</div><div class="t" style="left:250.6px;top:12px;font-size:24px;color:#a5a5a5">900</div><div class="t" style="left:350.6px;top:12px;font-size:24px;color:#a5a5a5">800</div><div class="t" style="left:450.6px;top:12px;font-size:24px;color:#a5a5a5">700</div><div class="t" style="left:550.6px;top:12px;font-size:24px;color:#a5a5a5">600</div><div class="t" style="left:650.6px;top:12px;font-size:24px;color:#a5a5a5">500</div><div class="t" style="left:750.6px;top:12px;font-size:24px;color:#a5a5a5">400</div><div class="t" style="left:850.6px;top:12px;font-size:24px;color:#a5a5a5">300</div><div class="t" style="left:950.6px;top:12px;font-size:24px;color:#a5a5a5">200</div><div class="t" style="left:1050.6px;top:12px;font-size:24px;color:#a5a5a5">100</div><div class="t" style="left:1150.6px;top:12px;font-size:24px;color:#a5a5a5">0</div><div class="t" style="left:1250.6px;top:12px;font-size:24px;color:#a5a5a5">100</div><div class="t" style="left:1350.6px;top:12px;font-size:24px;color:#a5a5a5">200</div><div class="t" style="left:1450.6px;top:12px;font-size:24px;color:#a5a5a5">300</div><div class="t" style="left:1550.6px;top:12px;font-size:24px;color:#a5a5a5">400</div><div class="t" style="left:1650.6px;top:12px;font-size:24px;color:#a5a5a5">500</div><div class="t" style="left:1750.6px;top:12px;font-size:24px;color:#a5a5a5">600</div><div class="t" style="left:1850.6px;top:12px;font-size:24px;color:#a5a5a5">700</div><div class="t" style="left:1950.6px;top:12px;font-size:24px;color:#a5a5a5">800</div><div class="t" style="left:2050.6px;top:12px;font-size:24px;color:#a5a5a5">900</div><div class="t" style="left:2150.6px;top:12px;font-size:24px;color:#a5a5a5">1000</div><div class="t" style="left:2250.6px;top:12px;font-size:24px;color:#a5a5a5">1100</div><div class="t" style="left:2350.6px;top:12px;font-size:24px;color:#a5a5a5">1200</div><div class="t" style="left:2450.6px;top:12px;font-size:24px;color:#a5a5a5">1300</div><div class="t" style="left:2550.6px;top:12px;font-size:24px;color:#a5a5a5">1400</div><div class="t" style="left:2650.6px;top:12px;font-size:24px;color:#a5a5a5">1500</div><div class="t" style="left:2750.6px;top:12px;font-size:24px;color:#a5a5a5">1600</div><div class="t" style="left:2850.6px;top:12px;font-size:24px;color:#a5a5a5">1700</div><div class="t" style="left:2950.6px;top:12px;font-size:24px;color:#a5a5a5">1800</div><div class="t" style="left:3050.6px;top:12px;font-size:24px;color:#a5a5a5">1900</div><div class="t" style="left:3150.6px;top:12px;font-size:24px;color:#a5a5a5">2000</div><div class="t" style="left:3250.6px;top:12px;font-size:24px;color:#a5a5a5">2100</div><div class="t" style="left:3350.6px;top:12px;font-size:24px;color:#a5a5a5">2200</div>
<div class="a" style="left:349px;top:4px;width:2px;height:16px;background:#d8d8d8"></div>
</div>
<div id="vruler" class="a" style="overflow:hidden">
<svg class="a" style="left:0;top:0" width="34" height="1887"><path d="M26 9.6h8M26 19.6h8M26 29.6h8M26 39.6h8M22 49.6h12M26 59.6h8M26 69.6h8M26 79.6h8M26 89.6h8M1 99.6h33M26 109.6h8M26 119.6h8M26 129.6h8M26 139.6h8M22 149.6h12M26 159.6h8M26 169.6h8M26 179.6h8M26 189.6h8M1 199.6h33M26 209.6h8M26 219.6h8M26 229.6h8M26 239.6h8M22 249.6h12M26 259.6h8M26 269.6h8M26 279.6h8M26 289.6h8M1 299.6h33M26 309.6h8M26 319.6h8M26 329.6h8M26 339.6h8M22 349.6h12M26 359.6h8M26 369.6h8M26 379.6h8M26 389.6h8M1 399.6h33M26 409.6h8M26 419.6h8M26 429.6h8M26 439.6h8M22 449.6h12M26 459.6h8M26 469.6h8M26 479.6h8M26 489.6h8M1 499.6h33M26 509.6h8M26 519.6h8M26 529.6h8M26 539.6h8M22 549.6h12M26 559.6h8M26 569.6h8M26 579.6h8M26 589.6h8M1 599.6h33M26 609.6h8M26 619.6h8M26 629.6h8M26 639.6h8M22 649.6h12M26 659.6h8M26 669.6h8M26 679.6h8M26 689.6h8M1 699.6h33M26 709.6h8M26 719.6h8M26 729.6h8M26 739.6h8M22 749.6h12M26 759.6h8M26 769.6h8M26 779.6h8M26 789.6h8M1 799.6h33M26 809.6h8M26 819.6h8M26 829.6h8M26 839.6h8M22 849.6h12M26 859.6h8M26 869.6h8M26 879.6h8M26 889.6h8M1 899.6h33M26 909.6h8M26 919.6h8M26 929.6h8M26 939.6h8M22 949.6h12M26 959.6h8M26 969.6h8M26 979.6h8M26 989.6h8M1 999.6h33M26 1009.6h8M26 1019.6h8M26 1029.6h8M26 1039.6h8M22 1049.6h12M26 1059.6h8M26 1069.6h8M26 1079.6h8M26 1089.6h8M1 1099.6h33M26 1109.6h8M26 1119.6h8M26 1129.6h8M26 1139.6h8M22 1149.6h12M26 1159.6h8M26 1169.6h8M26 1179.6h8M26 1189.6h8M1 1199.6h33M26 1209.6h8M26 1219.6h8M26 1229.6h8M26 1239.6h8M22 1249.6h12M26 1259.6h8M26 1269.6h8M26 1279.6h8M26 1289.6h8M1 1299.6h33M26 1309.6h8M26 1319.6h8M26 1329.6h8M26 1339.6h8M22 1349.6h12M26 1359.6h8M26 1369.6h8M26 1379.6h8M26 1389.6h8M1 1399.6h33M26 1409.6h8M26 1419.6h8M26 1429.6h8M26 1439.6h8M22 1449.6h12M26 1459.6h8M26 1469.6h8M26 1479.6h8M26 1489.6h8M1 1499.6h33M26 1509.6h8M26 1519.6h8M26 1529.6h8M26 1539.6h8M22 1549.6h12M26 1559.6h8M26 1569.6h8M26 1579.6h8M26 1589.6h8M1 1599.6h33M26 1609.6h8M26 1619.6h8M26 1629.6h8M26 1639.6h8M22 1649.6h12M26 1659.6h8M26 1669.6h8M26 1679.6h8M26 1689.6h8M1 1699.6h33M26 1709.6h8M26 1719.6h8M26 1729.6h8M26 1739.6h8M22 1749.6h12M26 1759.6h8M26 1769.6h8M26 1779.6h8M26 1789.6h8M1 1799.6h33M26 1809.6h8M26 1819.6h8M26 1829.6h8M26 1839.6h8M22 1849.6h12M26 1859.6h8M26 1869.6h8M26 1879.6h8" stroke="#8c8c8c" stroke-width="1.6"/></svg>
<div class="t" style="left:0;top:4.1px;width:22px;text-align:center;font-size:30px;line-height:24px;color:#a5a5a5">7</div><div class="t" style="left:0;top:28.4px;width:22px;text-align:center;font-size:30px;line-height:24px;color:#a5a5a5">0</div><div class="t" style="left:0;top:52.7px;width:22px;text-align:center;font-size:30px;line-height:24px;color:#a5a5a5">0</div><div class="t" style="left:0;top:104.1px;width:22px;text-align:center;font-size:30px;line-height:24px;color:#a5a5a5">6</div><div class="t" style="left:0;top:128.4px;width:22px;text-align:center;font-size:30px;line-height:24px;color:#a5a5a5">0</div><div class="t" style="left:0;top:152.7px;width:22px;text-align:center;font-size:30px;line-height:24px;color:#a5a5a5">0</div><div class="t" style="left:0;top:204.1px;width:22px;text-align:center;font-size:30px;line-height:24px;color:#a5a5a5">5</div><div class="t" style="left:0;top:228.4px;width:22px;text-align:center;font-size:30px;line-height:24px;color:#a5a5a5">0</div><div class="t" style="left:0;top:252.7px;width:22px;text-align:center;font-size:30px;line-height:24px;color:#a5a5a5">0</div><div class="t" style="left:0;top:304.1px;width:22px;text-align:center;font-size:30px;line-height:24px;color:#a5a5a5">4</div><div class="t" style="left:0;top:328.4px;width:22px;text-align:center;font-size:30px;line-height:24px;color:#a5a5a5">0</div><div class="t" style="left:0;top:352.7px;width:22px;text-align:center;font-size:30px;line-height:24px;color:#a5a5a5">0</div><div class="t" style="left:0;top:404.1px;width:22px;text-align:center;font-size:30px;line-height:24px;color:#a5a5a5">3</div><div class="t" style="left:0;top:428.4px;width:22px;text-align:center;font-size:30px;line-height:24px;color:#a5a5a5">0</div><div class="t" style="left:0;top:452.7px;width:22px;text-align:center;font-size:30px;line-height:24px;color:#a5a5a5">0</div><div class="t" style="left:0;top:504.1px;width:22px;text-align:center;font-size:30px;line-height:24px;color:#a5a5a5">2</div><div class="t" style="left:0;top:528.4px;width:22px;text-align:center;font-size:30px;line-height:24px;color:#a5a5a5">0</div><div class="t" style="left:0;top:552.7px;width:22px;text-align:center;font-size:30px;line-height:24px;color:#a5a5a5">0</div><div class="t" style="left:0;top:604.1px;width:22px;text-align:center;font-size:30px;line-height:24px;color:#a5a5a5">1</div><div class="t" style="left:0;top:628.4px;width:22px;text-align:center;font-size:30px;line-height:24px;color:#a5a5a5">0</div><div class="t" style="left:0;top:652.7px;width:22px;text-align:center;font-size:30px;line-height:24px;color:#a5a5a5">0</div><div class="t" style="left:0;top:704.1px;width:22px;text-align:center;font-size:30px;line-height:24px;color:#a5a5a5">0</div><div class="t" style="left:0;top:804.1px;width:22px;text-align:center;font-size:30px;line-height:24px;color:#a5a5a5">1</div><div class="t" style="left:0;top:828.4px;width:22px;text-align:center;font-size:30px;line-height:24px;color:#a5a5a5">0</div><div class="t" style="left:0;top:852.7px;width:22px;text-align:center;font-size:30px;line-height:24px;color:#a5a5a5">0</div><div class="t" style="left:0;top:904.1px;width:22px;text-align:center;font-size:30px;line-height:24px;color:#a5a5a5">2</div><div class="t" style="left:0;top:928.4px;width:22px;text-align:center;font-size:30px;line-height:24px;color:#a5a5a5">0</div><div class="t" style="left:0;top:952.7px;width:22px;text-align:center;font-size:30px;line-height:24px;color:#a5a5a5">0</div><div class="t" style="left:0;top:1004.1px;width:22px;text-align:center;font-size:30px;line-height:24px;color:#a5a5a5">3</div><div class="t" style="left:0;top:1028.4px;width:22px;text-align:center;font-size:30px;line-height:24px;color:#a5a5a5">0</div><div class="t" style="left:0;top:1052.7px;width:22px;text-align:center;font-size:30px;line-height:24px;color:#a5a5a5">0</div><div class="t" style="left:0;top:1104.1px;width:22px;text-align:center;font-size:30px;line-height:24px;color:#a5a5a5">4</div><div class="t" style="left:0;top:1128.4px;width:22px;text-align:center;font-size:30px;line-height:24px;color:#a5a5a5">0</div><div class="t" style="left:0;top:1152.7px;width:22px;text-align:center;font-size:30px;line-height:24px;color:#a5a5a5">0</div><div class="t" style="left:0;top:1204.1px;width:22px;text-align:center;font-size:30px;line-height:24px;color:#a5a5a5">5</div><div class="t" style="left:0;top:1228.4px;width:22px;text-align:center;font-size:30px;line-height:24px;color:#a5a5a5">0</div><div class="t" style="left:0;top:1252.7px;width:22px;text-align:center;font-size:30px;line-height:24px;color:#a5a5a5">0</div><div class="t" style="left:0;top:1304.1px;width:22px;text-align:center;font-size:30px;line-height:24px;color:#a5a5a5">6</div><div class="t" style="left:0;top:1328.4px;width:22px;text-align:center;font-size:30px;line-height:24px;color:#a5a5a5">0</div><div class="t" style="left:0;top:1352.7px;width:22px;text-align:center;font-size:30px;line-height:24px;color:#a5a5a5">0</div><div class="t" style="left:0;top:1404.1px;width:22px;text-align:center;font-size:30px;line-height:24px;color:#a5a5a5">7</div><div class="t" style="left:0;top:1428.4px;width:22px;text-align:center;font-size:30px;line-height:24px;color:#a5a5a5">0</div><div class="t" style="left:0;top:1452.7px;width:22px;text-align:center;font-size:30px;line-height:24px;color:#a5a5a5">0</div><div class="t" style="left:0;top:1504.1px;width:22px;text-align:center;font-size:30px;line-height:24px;color:#a5a5a5">8</div><div class="t" style="left:0;top:1528.4px;width:22px;text-align:center;font-size:30px;line-height:24px;color:#a5a5a5">0</div><div class="t" style="left:0;top:1552.7px;width:22px;text-align:center;font-size:30px;line-height:24px;color:#a5a5a5">0</div><div class="t" style="left:0;top:1604.1px;width:22px;text-align:center;font-size:30px;line-height:24px;color:#a5a5a5">9</div><div class="t" style="left:0;top:1628.4px;width:22px;text-align:center;font-size:30px;line-height:24px;color:#a5a5a5">0</div><div class="t" style="left:0;top:1652.7px;width:22px;text-align:center;font-size:30px;line-height:24px;color:#a5a5a5">0</div><div class="t" style="left:0;top:1700.6px;width:22px;text-align:center;font-size:30px;line-height:24px;color:#a5a5a5">1</div><div class="t" style="left:0;top:1722.4px;width:22px;text-align:center;font-size:30px;line-height:24px;color:#a5a5a5">0</div><div class="t" style="left:0;top:1744.2px;width:22px;text-align:center;font-size:30px;line-height:24px;color:#a5a5a5">0</div><div class="t" style="left:0;top:1766.0px;width:22px;text-align:center;font-size:30px;line-height:24px;color:#a5a5a5">0</div><div class="t" style="left:0;top:1800.6px;width:22px;text-align:center;font-size:30px;line-height:24px;color:#a5a5a5">1</div><div class="t" style="left:0;top:1822.4px;width:22px;text-align:center;font-size:30px;line-height:24px;color:#a5a5a5">1</div><div class="t" style="left:0;top:1844.2px;width:22px;text-align:center;font-size:30px;line-height:24px;color:#a5a5a5">0</div><div class="t" style="left:0;top:1866.0px;width:22px;text-align:center;font-size:30px;line-height:24px;color:#a5a5a5">0</div>
</div>
<div class="a" style="left:116px;top:255px;width:2970px;height:1887px;background:#282828"></div>
<div id="status" class="a">
<div class="a" style="left:120px;top:0;width:366px;height:32px;background:#4f4f4f"></div>
<div class="t" style="left:32px;top:5px;font-size:22px;color:#ececec">100%</div>
<div class="t" style="left:142px;top:4px;font-size:23px;color:#d2d2d2">500 像素 x 375 像素 (72 ppi)</div>
<svg class="a" style="left:466px;top:8px" width="10" height="18" viewBox="0 0 10 18"><path d="M1.5 1.5l7 7.5-7 7.5" stroke="#d8d8d8" stroke-width="2" fill="none"/></svg>
<div class="a" style="left:1360px;top:6px;width:1418px;height:20px;border-radius:10px;background:#696969"></div>
</div>
<div id="timeline" class="a">
<div class="a" style="left:0;top:0;width:102px;height:56px;background:#535353"></div>
<div class="t" style="left:22px;top:16px;font-size:23px;color:#e6e6e6">时间轴</div>
<div class="a" style="left:0;top:56px;width:3004px;height:4px;background:#3a3a3a"></div>
</div>
<div id="dock" class="a">
<div class="a" style="left:0;top:0;width:77px;height:24px;background:#424242"></div>
<svg class="a" style="left:48px;top:7px" width="16" height="11" viewBox="0 0 16 11"><path d="M6 1L2 5.5 6 10M14 1l-4 4.5 4 4.5" stroke="#dadada" stroke-width="1.8" fill="none"/></svg>
<div class="a" style="left:0;top:0;width:2px;height:2077px;background:#3a3a3a"></div>
<div class="a" style="left:19px;top:32px;width:38px;height:7px;background:repeating-linear-gradient(90deg,#3c3c3c 0 2px,transparent 2px 4px)"></div>
<svg class="a" style="left:18px;top:52px" width="17" height="17" viewBox="0 0 17 17"><g fill="#dcdcdc"><rect x="0" y="0" width="4" height="3"/><rect x="0" y="7" width="4" height="3"/><rect x="0" y="14" width="4" height="3"/><rect x="6" y="0" width="11" height="3"/><rect x="6" y="7" width="11" height="3"/><rect x="6" y="14" width="11" height="3"/></g></svg>
<svg class="a" style="left:40px;top:57px" width="20" height="18" viewBox="0 0 20 18"><path d="M20 0L6 12l3 3L20 2z" fill="#dcdcdc"/></svg>
<div class="a" style="left:2px;top:161px;width:75px;height:2px;background:#3c3c3c"></div>
<div class="a" style="left:2px;top:243px;width:75px;height:2px;background:#3c3c3c"></div>
<div class="a" style="left:2px;top:381px;width:75px;height:2px;background:#3c3c3c"></div>
<div class="a" style="left:2px;top:463px;width:75px;height:2px;background:#3c3c3c"></div>
<div class="a" style="left:2px;top:545px;width:75px;height:2px;background:#3c3c3c"></div>
<div class="a" style="left:2px;top:547px;width:75px;height:1530px;background:#4b4b4b"></div><div class="a" style="left:53px;top:73px;width:4px;height:2004px;background:#3d3d3d"></div>
</div>
<div id="layers" class="a">
<div class="a" style="left:0;top:0;width:474px;height:25px;background:#424242;border-radius:8px 8px 0 0"></div>
<svg class="a" style="left:9px;top:6px" width="14" height="14" viewBox="0 0 14 14"><path d="M2 2l10 10M12 2L2 12" stroke="#dadada" stroke-width="2.6"/></svg>
<svg class="a" style="left:444px;top:7px" width="16" height="11" viewBox="0 0 16 11"><path d="M6 1L2 5.5 6 10M14 1l-4 4.5 4 4.5" stroke="#dadada" stroke-width="1.8" fill="none"/></svg>
<div class="a" style="left:0;top:25px;width:474px;height:57px;background:#424242"></div>
<div class="a" style="left:0;top:25px;width:80px;height:57px;background:#535353"></div>
<div class="a" style="left:160px;top:25px;width:2px;height:57px;background:#3c3c3c"></div>
<div class="a" style="left:242px;top:25px;width:2px;height:57px;background:#3c3c3c"></div>
<div class="t" style="left:19px;top:42px;font-size:22px;color:#f0f0f0">图层</div>
<div class="t" style="left:98px;top:42px;font-size:22px;color:#cfcfcf">属性</div>
<div class="t" style="left:180px;top:42px;font-size:22px;color:#cfcfcf">通道</div>
<div class="a" style="left:444px;top:46px;width:21px;height:14px;background:repeating-linear-gradient(#d0d0d0 0 2px,transparent 2px 4px)"></div>
<div class="a" style="left:0;top:82px;width:474px;height:64px;background:#535353"></div>
<div class="a" style="left:0;top:146px;width:474px;height:3px;background:#434343"></div>
<div class="a" style="left:0;top:149px;width:474px;height:56px;background:#535353"></div>
<div class="a" style="left:0;top:205px;width:474px;height:3px;background:#434343"></div>
<div class="a" style="left:0;top:208px;width:474px;height:58px;background:#535353"></div>
<div class="ddn" style="left:7px;top:100px;width:150px;height:37px;background:#474747;border-color:#5e5e5e"></div>
<svg class="a" style="left:24px;top:109px" width="20" height="21" viewBox="0 0 20 21"><circle cx="8" cy="8" r="6" fill="none" stroke="#e0e0e0" stroke-width="2.6"/><path d="M12.5 12.5l6 6" stroke="#e0e0e0" stroke-width="3" stroke-linecap="round"/></svg>
<div class="t" style="left:50px;top:108px;font-size:22px;color:#ececec;font-weight:bold">类型</div>
<svg class="a" style="left:137px;top:114px" width="15" height="10" viewBox="0 0 15 10"><path d="M1.5 1.5l6 6 6-6" stroke="#dcdcdc" stroke-width="2.2" fill="none"/></svg>
<svg class="a" style="left:186px;top:107px" width="26" height="22" viewBox="0 0 26 22"><rect x="1.2" y="1.2" width="23.6" height="19.6" fill="none" stroke="#e0e0e0" stroke-width="2.2"/><path d="M4 17l6-8 4 5 3-3 5 6z" fill="#e0e0e0"/></svg>
<svg class="a" style="left:236px;top:106px" width="22" height="22" viewBox="0 0 22 22"><circle cx="11" cy="11" r="9.5" fill="none" stroke="#e0e0e0" stroke-width="2.2"/><path d="M17.7 4.3A9.5 9.5 0 0 1 4.3 17.7z" fill="#e0e0e0"/></svg>
<svg class="a" style="left:284px;top:107px" width="22" height="22" viewBox="0 0 22 22"><path d="M1 1h20v6h-2V3.5h-6.5v15.5h3v2h-9v-2h3V3.5H3V7H1z" fill="#e0e0e0"/></svg>
<svg class="a" style="left:331px;top:106px" width="24" height="24" viewBox="0 0 24 24"><rect x="3" y="3" width="18" height="18" fill="none" stroke="#e0e0e0" stroke-width="2"/><g fill="#e0e0e0" stroke="#535353" stroke-width="1"><rect x=".5" y=".5" width="5" height="5"/><rect x="18.5" y=".5" width="5" height="5"/><rect x=".5" y="18.5" width="5" height="5"/><rect x="18.5" y="18.5" width="5" height="5"/></g></svg>
<svg class="a" style="left:382px;top:105px" width="22" height="25" viewBox="0 0 22 25"><path d="M7 1h9l5 5v14H7z" fill="none" stroke="#e0e0e0" stroke-width="2"/><path d="M15 1v6h6" fill="none" stroke="#e0e0e0" stroke-width="2"/><rect x="1" y="12" width="11" height="12" fill="#e0e0e0"/></svg>
<div class="a" style="left:433px;top:100px;width:18px;height:36px;border-radius:9px;background:#3f3f3f;box-shadow:inset 0 0 0 1px #5c5c5c"></div>
<div class="a" style="left:434px;top:101px;width:16px;height:16px;border-radius:50%;background:#e2e2e2"></div>
<div class="ddn" style="left:7px;top:158px;width:227px;height:37px;background:#474747;border-color:#5e5e5e"></div>
<div class="t" style="left:23px;top:166px;font-size:22px;color:#ececec;font-weight:bold">正常</div>
<svg class="a" style="left:212px;top:171px" width="15" height="10" viewBox="0 0 15 10"><path d="M1.5 1.5l6 6 6-6" stroke="#dcdcdc" stroke-width="2.2" fill="none"/></svg>
<div class="t" style="left:241px;top:166px;font-size:22px;color:#d6d6d6">不透明度:</div>
<div class="ddn" style="left:342px;top:158px;width:108px;height:37px;background:#474747;border-color:#5e5e5e"></div>
<div class="a" style="left:419px;top:160px;width:2px;height:33px;background:#5e5e5e"></div>
<div class="t" style="left:349px;top:167px;font-size:22px;color:#f0f0f0">100%</div>
<svg class="a" style="left:428px;top:172px" width="14" height="9" viewBox="0 0 14 9"><path d="M1.5 1.5l5.5 5.5 5.5-5.5" stroke="#dcdcdc" stroke-width="2.2" fill="none"/></svg>
<div class="t" style="left:10px;top:223px;font-size:22px;color:#d6d6d6">锁定:</div>
<svg class="a" style="left:75px;top:220px" width="22" height="22" viewBox="0 0 22 22"><rect x="1" y="1" width="20" height="20" fill="none" stroke="#e0e0e0" stroke-width="2"/><g fill="#e0e0e0"><rect x="1" y="1" width="7" height="7"/><rect x="14" y="1" width="7" height="7"/><rect x="7.5" y="7.5" width="7" height="7"/><rect x="1" y="14" width="7" height="7"/><rect x="14" y="14" width="7" height="7"/></g></svg>
<svg class="a" style="left:119px;top:218px" width="26" height="27" viewBox="0 0 26 27"><path d="M25 1L11 16l3 3L26 3z" fill="#e0e0e0"/><path d="M9 17c-4 0-6 3-6 5s-1 3-3 4c6 1 12-1 12-6z" fill="#e0e0e0"/></svg>
<svg class="a" style="left:160px;top:218px" width="26" height="26" viewBox="0 0 26 26"><path d="M13 3v20M3 13h20" stroke="#e0e0e0" stroke-width="2.4"/><path d="M13 0l-5 6h10zM13 26l-5-6h10zM0 13l6-5v10zM26 13l-6-5v10z" fill="#e0e0e0"/></svg>
<svg class="a" style="left:204px;top:219px" width="28" height="24" viewBox="0 0 28 24"><path d="M6 5h13l4 4v10H6z" fill="none" stroke="#e0e0e0" stroke-width="2.2"/><g fill="#e0e0e0"><rect x="0" y="4" width="3" height="2"/><rect x="6" y="0" width="2" height="3"/><rect x="25" y="18" width="3" height="2"/><rect x="21" y="21" width="2" height="3"/><rect x="0" y="18" width="3" height="2"/><rect x="25" y="4" width="3" height="2"/></g></svg>
<svg class="a" style="left:252px;top:217px" width="21" height="27" viewBox="0 0 21 27"><path d="M5 12V8a5.5 5.5 0 0 1 11 0v4" fill="none" stroke="#e0e0e0" stroke-width="2.6"/><rect x="1" y="12" width="19" height="14" rx="2" fill="#e0e0e0"/><circle cx="10.5" cy="19" r="2.2" fill="#535353"/></svg>
<div class="t" style="left:286px;top:223px;font-size:22px;color:#d6d6d6">填充:</div>
<div class="ddn" style="left:342px;top:216px;width:108px;height:37px;background:#474747;border-color:#5e5e5e"></div>
<div class="a" style="left:419px;top:218px;width:2px;height:33px;background:#5e5e5e"></div>
<div class="t" style="left:349px;top:225px;font-size:22px;color:#f0f0f0">100%</div>
<svg class="a" style="left:428px;top:230px" width="14" height="9" viewBox="0 0 14 9"><path d="M1.5 1.5l5.5 5.5 5.5-5.5" stroke="#dcdcdc" stroke-width="2.2" fill="none"/></svg>
<div class="a" style="left:0;top:266px;width:474px;height:2px;background:#3e3e3e"></div>
<div class="a" style="left:61px;top:268px;width:383px;height:67px;background:#6a6a6a"></div>
<div class="a" style="left:0;top:335px;width:444px;height:2px;background:#3e3e3e"></div>
<div class="a" style="left:60px;top:268px;width:1px;height:67px;background:#3e3e3e"></div>
<svg class="a" style="left:18px;top:293px" width="25" height="16" viewBox="0 0 25 16"><path d="M1 8Q12.5-4 24 8 12.5 20 1 8z" fill="#e0e0e0"/><circle cx="12.5" cy="8" r="4" fill="#484848"/><circle cx="12.5" cy="8" r="1.8" fill="#e0e0e0"/></svg>
<div class="a" style="left:64px;top:273px;width:72px;height:58px;background:#333"></div>
<div class="a" style="left:70px;top:279px;width:61px;height:46px;background:linear-gradient(175deg,#fbfbfb 0%,#f2f2f2 55%,#dfe4ea 75%,#f5f5f5 100%)"></div>
<svg class="a" style="left:70px;top:279px" width="61" height="46" viewBox="0 0 61 46"><path d="M14 10l3-5 3 4h5l3-4 2 6c1 3 0 6-2 8 3 2 6 4 9 8l5-6 2 1-4 9c-3 4-9 5-15 4-6 0-10-2-11-6-1-3 0-6 1-8-2-3-2-7-1-11z" fill="#d48a45"/><path d="M17 20q6 2 12 0M18 25q6 2 13 0" stroke="#a5602a" stroke-width="1.5" fill="none"/><path d="M44 14c5-2 11 0 13 6l-3 8-9-2z" fill="#ece3da"/></svg>
<svg class="a" style="left:64px;top:273px" width="72" height="58" viewBox="0 0 72 58"><path d="M1 14V1h19M52 1h19v13M71 44v13H52M20 57H1V44" fill="none" stroke="#fff" stroke-width="2.4"/></svg>
<div class="t" style="left:149px;top:291px;font-size:22px;color:#f0f0f0">图层 0</div>

</div>
<div id="actions" class="a"><div class="a" style="left:0;top:0;width:501px;height:7px;background:#393939"></div>
<div class="a" style="left:0;top:7px;width:501px;height:56px;background:#424242"></div>
<div class="a" style="left:0;top:7px;width:208px;height:58px;background:#535353"></div>
<div class="t" style="left:141px;top:19px;font-size:22.5px;line-height:26px;color:#e6e6e6">动作</div>
<svg class="a" style="left:422px;top:28px" width="19" height="15" viewBox="0 0 19 15"><path d="M1.5 1.5l6 6-6 6M10.5 1.5l6 6-6 6" stroke="#d8d8d8" stroke-width="2.6" fill="none"/></svg>
<div class="a" style="left:455px;top:24px;width:2px;height:24px;background:#bdbdbd"></div>
<div class="a" style="left:471px;top:28px;width:21px;height:15px;background:repeating-linear-gradient(#d0d0d0 0 2px,transparent 2px 4.3px)"></div>
<div class="a" style="left:0;top:63px;width:501px;height:682px;background:#424242"></div>
<div class="a" style="left:469px;top:70px;width:32px;height:675px;background:#4a4a4a"></div>
<div class="a" style="left:0px;top:63px;width:469px;height:48px;background:#535353"></div>
<div class="t" style="left:178px;top:77px;font-size:22.5px;line-height:26px;color:#e8e8e8">默认动作</div>
<div class="a" style="left:0px;top:113px;width:469px;height:38px;background:#535353"></div>
<div class="t" style="left:158px;top:117px;font-size:22.5px;line-height:26px;color:#e8e8e8">淡出效果（选区）</div>
<div class="a" style="left:0px;top:153px;width:469px;height:38px;background:#535353"></div>
<div class="t" style="left:158px;top:157px;font-size:22.5px;line-height:26px;color:#e8e8e8">画框通道 - 50 像素</div>
<div class="a" style="left:0px;top:193px;width:469px;height:38px;background:#535353"></div>
<div class="t" style="left:158px;top:197px;font-size:22.5px;line-height:26px;color:#e8e8e8">木质画框 - 50 像素</div>
<div class="a" style="left:0px;top:233px;width:469px;height:38px;background:#535353"></div>
<div class="t" style="left:158px;top:237px;font-size:22.5px;line-height:26px;color:#e8e8e8">投影（文字）</div>
<div class="a" style="left:0px;top:273px;width:469px;height:38px;background:#535353"></div>
<div class="t" style="left:158px;top:277px;font-size:22.5px;line-height:26px;color:#e8e8e8">水中倒影（文字）</div>
<div class="a" style="left:0px;top:313px;width:469px;height:38px;background:#535353"></div>
<div class="t" style="left:158px;top:317px;font-size:22.5px;line-height:26px;color:#e8e8e8">自定义 RGB 到灰度</div>
<div class="a" style="left:0px;top:353px;width:469px;height:38px;background:#535353"></div>
<div class="t" style="left:158px;top:357px;font-size:22.5px;line-height:26px;color:#e8e8e8">熔化的铅块</div>
<div class="a" style="left:0px;top:393px;width:469px;height:38px;background:#535353"></div>
<div class="t" style="left:158px;top:397px;font-size:22.5px;line-height:26px;color:#e8e8e8">棕褐色调（图层）</div>
<div class="a" style="left:0px;top:433px;width:469px;height:38px;background:#535353"></div>
<div class="t" style="left:158px;top:437px;font-size:22.5px;line-height:26px;color:#e8e8e8">四分颜色</div>
<div class="a" style="left:0px;top:473px;width:469px;height:38px;background:#535353"></div>
<div class="t" style="left:158px;top:477px;font-size:22.5px;line-height:26px;color:#e8e8e8">存储为 Photoshop PDF</div>
<div class="a" style="left:0px;top:513px;width:469px;height:38px;background:#535353"></div>
<div class="t" style="left:158px;top:517px;font-size:22.5px;line-height:26px;color:#e8e8e8">渐变映射</div>
<div class="a" style="left:0px;top:553px;width:469px;height:38px;background:#535353"></div>
<div class="t" style="left:158px;top:557px;font-size:22.5px;line-height:26px;color:#e8e8e8">混合器画笔克隆绘图设置</div>
<div class="a" style="left:0px;top:593px;width:469px;height:38px;background:#535353"></div>
<div class="t" style="left:158px;top:597px;font-size:22.5px;line-height:26px;color:#e8e8e8">动作 1</div>
<div class="a" style="left:185px;top:633px;width:284px;height:38px;background:#535353"></div>
<div class="t" style="left:197px;top:637px;font-size:22.5px;line-height:26px;color:#e8e8e8">图像大小</div>
<div class="a" style="left:185px;top:673px;width:284px;height:38px;background:#6a6a6a"></div>
<div class="t" style="left:197px;top:677px;font-size:22.5px;line-height:26px;color:#e8e8e8">存储</div>
<div class="a" style="left:0;top:745px;width:501px;height:46px;background:#535353"></div>
<div class="a" style="left:0;top:791px;width:501px;height:4px;background:#3a3a3a"></div>
<div class="a" style="left:0;top:795px;width:501px;height:11px;background:#4a4a4a"></div>
<div class="a" style="left:230px;top:796px;width:38px;height:8px;background:repeating-linear-gradient(90deg,#3a3a3a 0 2px,transparent 2px 4px)"></div>
<div class="a" style="left:129px;top:762px;width:14px;height:14px;background:#7a7a7a"></div>
<div class="a" style="left:185px;top:760px;width:18px;height:18px;border-radius:50%;background:#d6d6d6"></div>
<svg class="a" style="left:245px;top:760px" width="19" height="19"><path d="M1 0l18 9.5L1 19z" fill="#d6d6d6"/></svg>
<svg class="a" style="left:298px;top:758px" width="25" height="21" viewBox="0 0 25 21"><path d="M0 3h9l2 3h14v15H0z" fill="#d6d6d6"/><rect x="0" y="0" width="9" height="2" fill="#d6d6d6"/></svg>
<svg class="a" style="left:363px;top:758px" width="23" height="23" viewBox="0 0 23 23"><rect x="1.2" y="1.2" width="20.6" height="20.6" fill="none" stroke="#d6d6d6" stroke-width="2.4"/><path d="M11.5 5v13M5 11.5h13" stroke="#d6d6d6" stroke-width="2.4"/></svg>
<svg class="a" style="left:420px;top:756px" width="23" height="26" viewBox="0 0 23 26"><path d="M1 5h21M8 5V2h7v3M4 8v16h15V8" fill="none" stroke="#d6d6d6" stroke-width="2.4"/><path d="M8.5 10v11M11.5 10v11M14.5 10v11" stroke="#d6d6d6" stroke-width="1.8"/></svg></div>
<div id="mini" class="a">
<div class="a" style="left:0;top:0;width:77px;height:27px;background:#424242;border-radius:8px 8px 0 0"></div>
<svg class="a" style="left:12px;top:7px" width="14" height="14" viewBox="0 0 14 14"><path d="M2 2l10 10M12 2L2 12" stroke="#d6d6d6" stroke-width="2.6"/></svg>
<svg class="a" style="left:51px;top:8px" width="15" height="11" viewBox="0 0 15 11"><path d="M1.5 1l4 4.5-4 4.5M8.5 1l4 4.5-4 4.5" stroke="#d6d6d6" stroke-width="1.8" fill="none"/></svg>
<div class="a" style="left:0;top:27px;width:77px;height:2px;background:#3a3a3a"></div>
<div class="a" style="left:19px;top:35px;width:38px;height:7px;background:repeating-linear-gradient(90deg,#3a3a3a 0 2px,transparent 2px 4px)"></div>
<svg class="a" style="left:26px;top:57px" width="30" height="34" viewBox="0 0 30 34"><g fill="none" stroke="#d6d6d6" stroke-width="2"><rect x="1" y="1" width="8" height="8"/><rect x="1" y="13" width="8" height="8"/></g><rect x="0" y="25" width="10" height="9" fill="#d6d6d6"/><path d="M16 32c8-5 10-16 4-24" fill="none" stroke="#d6d6d6" stroke-width="2.6"/><path d="M14 9l8-6 1 9z" fill="#d6d6d6"/></svg>
<div class="a" style="left:11px;top:107px;width:56px;height:44px;box-sizing:border-box;background:#2f2f2f;border:1.5px solid #5d5d5d;border-radius:2px"></div>
<svg class="a" style="left:28px;top:115px" width="26" height="28"><path d="M0 0l26 14L0 28z" fill="#dcdcdc"/></svg>
</div>
<div id="dialog" class="a">
<div class="a" style="left:0px;top:0px;width:1678px;height:43px;background:linear-gradient(#e9e9e9,#d4d4d4);border-bottom:1px solid #b0b0b0;box-sizing:border-box"></div>
<div class="a" style="left:16px;top:10px;width:24px;height:24px;border-radius:50%;background:#d7d7d7;box-shadow:inset 0 0 0 1px #bcbcbc"></div>
<div class="a" style="left:56px;top:10px;width:24px;height:24px;border-radius:50%;background:#d7d7d7;box-shadow:inset 0 0 0 1px #bcbcbc"></div>
<div class="a" style="left:96px;top:10px;width:24px;height:24px;border-radius:50%;background:#5dc452;box-shadow:inset 0 0 0 1px #43a338"></div>
<div class="t" style="left:799px;top:9.0px;font-size:26px;line-height:26px;color:#4c4c4c;">存储为</div>
<div class="t" style="right:1053px;top:84.0px;font-size:26px;line-height:26px;color:#555;text-align:right">存储为:</div>
<div class="a" style="left:645px;top:77px;width:498px;height:40px;background:#fff;box-shadow:inset 0 0 0 1px #c4c4c4"></div>
<div class="t" style="left:653px;top:84.0px;font-size:26px;line-height:26px;color:#111;">(^ω^) 喵 (7).jpg</div>
<div class="t" style="right:1053px;top:143.0px;font-size:26px;line-height:26px;color:#555;text-align:right">标签:</div>
<div class="a" style="left:645px;top:135px;width:498px;height:42px;background:#fff;box-shadow:inset 0 0 0 1px #c4c4c4"></div>
<div class="a" style="left:0px;top:199px;width:1678px;height:1px;background:#d6d6d6"></div>
<div class="a" style="left:22px;top:218px;width:50px;height:44px;background:linear-gradient(#ffffff,#f1f1f1);border-radius:7px;box-shadow:0 0 0 1px #d2d2d2,0 1px 1px rgba(0,0,0,.12)"></div>
<div class="a" style="left:74px;top:218px;width:50px;height:44px;background:linear-gradient(#ffffff,#f1f1f1);border-radius:7px;box-shadow:0 0 0 1px #d2d2d2,0 1px 1px rgba(0,0,0,.12)"></div>
<svg class="a" style="left:39px;top:228px" width="16" height="24" viewBox="0 0 16 24"><path d="M13 2L3 12l10 10" fill="none" stroke="#3a3a3a" stroke-width="3"/></svg>
<svg class="a" style="left:92px;top:228px" width="16" height="24" viewBox="0 0 16 24"><path d="M3 2l10 10L3 22" fill="none" stroke="#a0a0a0" stroke-width="3"/></svg>
<div class="a" style="left:140px;top:218px;width:88px;height:44px;background:linear-gradient(#ffffff,#f1f1f1);border-radius:7px;box-shadow:0 0 0 1px #d2d2d2,0 1px 1px rgba(0,0,0,.12)"></div>
<svg class="a" style="left:155px;top:230px" width="56" height="21" viewBox="0 0 56 21"><rect x="1.5" y="1.5" width="31" height="18" rx="1" fill="none" stroke="#3a3a3a" stroke-width="2.6"/><path d="M12 1.5v18M22.5 1.5v18" stroke="#3a3a3a" stroke-width="2.4"/><path d="M42 6l6 6 6-6" fill="none" stroke="#3a3a3a" stroke-width="3"/></svg>
<div class="a" style="left:240px;top:218px;width:88px;height:44px;background:linear-gradient(#ffffff,#f1f1f1);border-radius:7px;box-shadow:0 0 0 1px #d2d2d2,0 1px 1px rgba(0,0,0,.12)"></div>
<svg class="a" style="left:267px;top:226px" width="38" height="26" viewBox="0 0 38 26"><path d="M27 9V6H14l-2-4H2v22h25v-4" fill="none" stroke="#3a3a3a" stroke-width="2.4"/><path d="M30 8v13M23.5 14.5h13" stroke="#3a3a3a" stroke-width="2.4"/></svg>
<div class="a" style="left:644px;top:218px;width:442px;height:43px;background:linear-gradient(#ffffff,#f1f1f1);border-radius:7px;box-shadow:0 0 0 1px #d2d2d2,0 1px 1px rgba(0,0,0,.12)"></div>
<svg class="a" style="left:654px;top:225px" width="36" height="30" viewBox="0 0 36 30"><path d="M1 3a2 2 0 0 1 2-2h9l3 3h18a2 2 0 0 1 2 2v21a2 2 0 0 1-2 2H3a2 2 0 0 1-2-2z" fill="#7ac1f3"/><path d="M1 8h34v19a2 2 0 0 1-2 2H3a2 2 0 0 1-2-2z" fill="#90cff7"/></svg>
<div class="t" style="left:696px;top:227.0px;font-size:26px;line-height:26px;color:#1e1e1e;">未命名文件夹</div>
<svg class="a" style="left:1060px;top:226px" width="17" height="28" viewBox="0 0 17 28"><path d="M2 10l6.5-7 6.5 7M2 18l6.5 7 6.5-7" fill="none" stroke="#3a3a3a" stroke-width="2.6"/></svg>
<div class="a" style="left:1104px;top:221px;width:39px;height:38px;background:linear-gradient(#ffffff,#f1f1f1);border-radius:7px;box-shadow:0 0 0 1px #d2d2d2,0 1px 1px rgba(0,0,0,.12)"></div>
<svg class="a" style="left:1114px;top:234px" width="19" height="12" viewBox="0 0 19 12"><path d="M2 10l7.5-7.5L17 10" fill="none" stroke="#2a2a2a" stroke-width="2.8"/></svg>
<div class="a" style="left:1220px;top:218px;width:436px;height:44px;background:linear-gradient(#fbfbfb,#f3f3f3);border-radius:7px;box-shadow:0 0 0 1px #d2d2d2"></div>
<svg class="a" style="left:1230px;top:227px" width="26" height="26" viewBox="0 0 26 26"><circle cx="10.5" cy="10.5" r="8.5" fill="none" stroke="#555" stroke-width="2.4"/><path d="M17 17l7 7" stroke="#555" stroke-width="2.8"/></svg>
<div class="t" style="left:1266px;top:227.5px;font-size:25px;line-height:25px;color:#a8a8a8;">搜索</div>
<div class="a" style="left:0px;top:283px;width:1678px;height:1px;background:#d0d0d0"></div>
<div class="a" style="left:0px;top:284px;width:311px;height:196px;background:#bababa"></div>
<div class="a" style="left:311px;top:284px;width:1px;height:196px;background:#a9a9a9"></div>
<div class="a" style="left:289px;top:290px;width:15px;height:74px;background:#959595;border-radius:8px"></div>
<div class="t" style="left:18px;top:300.8px;font-size:22.5px;line-height:22.5px;color:#595959;font-weight:bold">个人收藏</div>
<svg class="a" style="left:36px;top:342px" width="37" height="33" viewBox="0 0 37 33"><g stroke="#4a4a4a" stroke-width="5" stroke-linecap="round"><path d="M18 4L7 29M13 4l17 25M3 22h31"/></g></svg>
<div class="t" style="left:81px;top:346.0px;font-size:26px;line-height:26px;color:#1a1a1a;">应用程序</div>
<div class="a" style="left:0px;top:386px;width:280px;height:48px;background:#8a8a8a"></div>
<svg class="a" style="left:36px;top:395px" width="37" height="29" viewBox="0 0 37 29"><rect x="1.5" y="1.5" width="34" height="26" rx="4" fill="#4a4a4a" stroke="#1e1e1e" stroke-width="3"/><rect x="3" y="3" width="31" height="4" fill="#8a8a8a" opacity=".5"/><g fill="#8a8a8a"><rect x="9" y="21" width="5" height="4"/><rect x="16" y="21" width="5" height="4"/><rect x="23" y="21" width="5" height="4"/></g></svg>
<div class="t" style="left:81px;top:397.0px;font-size:26px;line-height:26px;color:#1a1a1a;font-weight:bold">桌面</div>
<svg class="a" style="left:38px;top:445px" width="33" height="34" viewBox="0 0 33 34"><path d="M1 10h12l5 5v18H1z" fill="#a9a9a9" stroke="#3f3f3f" stroke-width="2"/><path d="M13 1h12l6 6v19H13z" fill="#a9a9a9" stroke="#3f3f3f" stroke-width="2"/></svg>
<div class="t" style="left:81px;top:449.0px;font-size:26px;line-height:26px;color:#1a1a1a;">文稿</div>
<div class="a" style="left:312px;top:284px;width:380px;height:196px;background:#fff"></div>
<div class="a" style="left:312px;top:284px;width:380px;height:196px;overflow:hidden"><svg class="a" style="left:13px;top:-12.0px" width="30" height="19" viewBox="0 0 30 19"><rect x="1" y="1" width="28" height="17" fill="#fff" stroke="#d6d6d6" stroke-width="1"/><rect x="3" y="3" width="24" height="13" fill="#8f8f8f"/><rect x="10" y="6" width="10" height="7" fill="#e4ddd5"/></svg>
<div class="t" style="left:53px;top:-15.6px;font-size:26px;line-height:26px;color:#b1b1b1;word-spacing:0;letter-spacing:.5px">截屏2020-...下午8.26.22</div>
<svg class="a" style="left:13px;top:24.0px" width="30" height="19" viewBox="0 0 30 19"><rect x="1" y="1" width="28" height="17" fill="#fff" stroke="#d6d6d6" stroke-width="1"/><rect x="3" y="3" width="24" height="13" fill="#8f8f8f"/><rect x="10" y="6" width="10" height="7" fill="#e4ddd5"/></svg>
<div class="t" style="left:53px;top:20.4px;font-size:26px;line-height:26px;color:#b1b1b1;word-spacing:0;letter-spacing:.5px">截屏2020-...下午8.28.22</div>
<svg class="a" style="left:13px;top:60.0px" width="30" height="19" viewBox="0 0 30 19"><rect x="1" y="1" width="28" height="17" fill="#fff" stroke="#d6d6d6" stroke-width="1"/><rect x="3" y="3" width="24" height="13" fill="#8f8f8f"/><rect x="10" y="6" width="10" height="7" fill="#e4ddd5"/></svg>
<div class="t" style="left:53px;top:56.5px;font-size:26px;line-height:26px;color:#b1b1b1;word-spacing:0;letter-spacing:.5px">截屏2020-...下午8.28.33</div>
<svg class="a" style="left:13px;top:96.0px" width="30" height="19" viewBox="0 0 30 19"><rect x="1" y="1" width="28" height="17" fill="#fff" stroke="#d6d6d6" stroke-width="1"/><rect x="3" y="3" width="24" height="13" fill="#8f8f8f"/><rect x="10" y="6" width="10" height="7" fill="#e4ddd5"/></svg>
<div class="t" style="left:53px;top:92.0px;font-size:26px;line-height:26px;color:#b1b1b1;word-spacing:0;letter-spacing:.5px">截屏2020-...下午9.40.23</div>
</div>
<div class="a" style="left:0px;top:283px;width:1678px;height:1px;background:#d0d0d0"></div>
<svg class="a" style="left:325px;top:414px" width="31" height="24" viewBox="0 0 31 24"><path d="M0 3a2 2 0 0 1 2-2h8l3 3h16a2 2 0 0 1 2 2v16a2 2 0 0 1-2 2H2a2 2 0 0 1-2-2z" fill="#6fbcf2"/><path d="M0 7h31v15a2 2 0 0 1-2 2H2a2 2 0 0 1-2-2z" fill="#88cbf6"/></svg>
<div class="t" style="left:365px;top:413.0px;font-size:26px;line-height:26px;color:#111;">图片</div>
<svg class="a" style="left:676px;top:420px" width="12" height="14" viewBox="0 0 12 14"><path d="M0 0l12 7-12 7z" fill="#7a7a7a"/></svg>
<div class="a" style="left:312px;top:446px;width:380px;height:34px;background:#2562d7"></div>
<svg class="a" style="left:325px;top:451px" width="31" height="24" viewBox="0 0 31 24"><path d="M0 3a2 2 0 0 1 2-2h8l3 3h16a2 2 0 0 1 2 2v16a2 2 0 0 1-2 2H2a2 2 0 0 1-2-2z" fill="#6fbcf2"/><path d="M0 7h31v15a2 2 0 0 1-2 2H2a2 2 0 0 1-2-2z" fill="#8fd0f8"/></svg>
<div class="t" style="left:365px;top:449.0px;font-size:26px;line-height:26px;color:#fff;">图片修改</div>
<svg class="a" style="left:676px;top:455px" width="12" height="14" viewBox="0 0 12 14"><path d="M0 0l12 7-12 7z" fill="#fff"/></svg>
<div class="a" style="left:692px;top:284px;width:29px;height:196px;background:#f7f7f7;box-shadow:inset 1px 0 0 #ececec"></div>
<div class="a" style="left:699px;top:327px;width:17px;height:117px;background:#c2c2c2;border-radius:9px"></div>
<svg class="a" style="left:701px;top:458px" width="11" height="14" viewBox="0 0 11 14"><path d="M1.5 0v14M9.5 0v14" stroke="#9a9a9a" stroke-width="1.6"/></svg>
<div class="a" style="left:721px;top:284px;width:382px;height:196px;background:#fff;box-shadow:inset 1px 0 0 #e6e6e6"></div>
<svg class="a" style="left:736px;top:292px" width="30" height="22" viewBox="0 0 30 22"><rect x=".5" y=".5" width="29" height="21" fill="#fff" stroke="#d8d8d8"/><rect x="3" y="3" width="24" height="16" fill="#f1ede8"/><path d="M8 16l3-8 4 3 5 5z" fill="#c9a98a"/></svg>
<div class="t" style="left:776px;top:290.0px;font-size:26px;line-height:26px;color:#b4b4b4;">(^ω^) 喵 (7).jpg</div>
<div class="a" style="left:1103px;top:284px;width:28px;height:196px;background:#f7f7f7;box-shadow:inset 1px 0 0 #ececec,inset -1px 0 0 #ececec"></div>
<svg class="a" style="left:1111px;top:458px" width="11" height="14" viewBox="0 0 11 14"><path d="M1.5 0v14M9.5 0v14" stroke="#9a9a9a" stroke-width="1.6"/></svg>
<div class="a" style="left:1131px;top:284px;width:382px;height:196px;background:#fff"></div>
<div class="a" style="left:1513px;top:284px;width:28px;height:196px;background:#f7f7f7;box-shadow:inset 1px 0 0 #ececec,inset -1px 0 0 #ececec"></div>
<div class="a" style="left:1541px;top:284px;width:137px;height:196px;background:#fff"></div>
<div class="a" style="left:0px;top:480px;width:1678px;height:1px;background:#cfcfcf"></div>
<div class="a" style="left:186px;top:509px;width:188px;height:39px;background:linear-gradient(#ffffff,#f1f1f1);border-radius:7px;box-shadow:0 0 0 1px #d2d2d2,0 1px 1px rgba(0,0,0,.12)"></div>
<div class="t" style="left:201px;top:515.0px;font-size:26px;line-height:26px;color:#1e1e1e;">存储到云文档</div>
<div class="t" style="left:556px;top:510.0px;font-size:26px;line-height:26px;color:#1e1e1e;">格式:</div>
<div class="a" style="left:670px;top:504px;width:830px;height:38px;background:#fff;border-radius:6px;box-shadow:0 0 0 1px #cfcfcf,0 1px 1px rgba(0,0,0,.1)"></div>
<div class="a" style="left:1467px;top:504px;width:33px;height:38px;background:linear-gradient(#6aa6ff,#2a6ff0);border-radius:0 6px 6px 0"></div>
<svg class="a" style="left:1474px;top:509px" width="19" height="28" viewBox="0 0 19 28"><path d="M3 10l6.5-6.5L16 10M3 18l6.5 6.5L16 18" fill="none" stroke="#fff" stroke-width="2.6"/></svg>
<div class="t" style="left:688px;top:511.0px;font-size:26px;line-height:26px;color:#111;">JPEG</div>
<div class="t" style="left:556px;top:565.0px;font-size:26px;line-height:26px;color:#1e1e1e;">存储:</div>
<div class="t" style="left:556px;top:745.0px;font-size:26px;line-height:26px;color:#1e1e1e;">颜色:</div>
<div class="a" style="left:669px;top:573px;width:27px;height:27px;background:#f4f4f4;border-radius:5px;box-shadow:inset 0 0 0 1px #d9d9d9"></div>
<svg class="a" style="left:674px;top:578px" width="18" height="18" viewBox="0 0 18 18"><path d="M2 9l5 6 9-13" fill="none" stroke="#8a8a8a" stroke-width="2.6"/></svg>
<div class="t" style="left:706px;top:574.0px;font-size:26px;line-height:26px;color:#b4b4b4;">作为副本</div>
<div class="a" style="left:907px;top:573px;width:27px;height:27px;background:#f4f4f4;border-radius:5px;box-shadow:inset 0 0 0 1px #d9d9d9"></div>
<div class="t" style="left:944px;top:574.0px;font-size:26px;line-height:26px;color:#b4b4b4;">注释</div>
<div class="a" style="left:669px;top:633px;width:27px;height:27px;background:#f4f4f4;border-radius:5px;box-shadow:inset 0 0 0 1px #d9d9d9"></div>
<div class="t" style="left:706px;top:634.0px;font-size:26px;line-height:26px;color:#b4b4b4;">Alpha 通道</div>
<div class="a" style="left:907px;top:633px;width:27px;height:27px;background:#f4f4f4;border-radius:5px;box-shadow:inset 0 0 0 1px #d9d9d9"></div>
<div class="t" style="left:944px;top:634.0px;font-size:26px;line-height:26px;color:#b4b4b4;">专色</div>
<svg class="a" style="left:618px;top:692px" width="30" height="29" viewBox="0 0 30 29"><path d="M15 2L1 27h28z" fill="#f2c14a" stroke="#9a7a22" stroke-width="1.6" stroke-linejoin="round"/><rect x="13.6" y="9" width="2.8" height="10" rx="1" fill="#222"/><circle cx="15" cy="23" r="1.7" fill="#222"/></svg>
<div class="a" style="left:669px;top:693px;width:27px;height:27px;background:#f4f4f4;border-radius:5px;box-shadow:inset 0 0 0 1px #d9d9d9"></div>
<div class="t" style="left:706px;top:694.0px;font-size:26px;line-height:26px;color:#b4b4b4;">图层</div>
<div class="a" style="left:669px;top:752px;width:27px;height:27px;background:#f4f4f4;border-radius:5px;box-shadow:inset 0 0 0 1px #d9d9d9"></div>
<div class="t" style="left:706px;top:753.0px;font-size:26px;line-height:26px;color:#b4b4b4;">使用校样设置: 工作中的 CMYK</div>
<div class="a" style="left:669px;top:812px;width:27px;height:27px;background:#fff;border-radius:5px;box-shadow:inset 0 0 0 1px #bdbdbd,0 1px 1px rgba(0,0,0,.15)"></div>
<div class="t" style="left:706px;top:813.0px;font-size:26px;line-height:26px;color:#1a1a1a;">嵌入颜色配置文件: sRGB IEC61966-2.1</div>
<svg class="a" style="left:543px;top:866px" width="30" height="29" viewBox="0 0 30 29"><path d="M15 2L1 27h28z" fill="#f2c14a" stroke="#9a7a22" stroke-width="1.6" stroke-linejoin="round"/><rect x="13.6" y="9" width="2.8" height="10" rx="1" fill="#222"/><circle cx="15" cy="23" r="1.7" fill="#222"/></svg>
<div class="t" style="left:601px;top:861.8px;font-size:24.5px;line-height:24.5px;color:#1a1a1a;">在此选项下，文件必须存储为拷贝。</div>
<div class="a" style="left:0px;top:916px;width:1678px;height:1px;background:#d6d6d6"></div>
<div class="a" style="left:22px;top:940px;width:186px;height:38px;background:linear-gradient(#ffffff,#f1f1f1);border-radius:7px;box-shadow:0 0 0 1px #d2d2d2,0 1px 1px rgba(0,0,0,.12)"></div>
<div class="t" style="left:48px;top:946.0px;font-size:26px;line-height:26px;color:#1e1e1e;">新建文件夹</div>
<div class="a" style="left:1356px;top:940px;width:141px;height:38px;background:linear-gradient(#ffffff,#f1f1f1);border-radius:7px;box-shadow:0 0 0 1px #d2d2d2,0 1px 1px rgba(0,0,0,.12)"></div>
<div class="t" style="left:1399px;top:946.0px;font-size:26px;line-height:26px;color:#1e1e1e;">取消</div>
<div class="a" style="left:1515px;top:940px;width:142px;height:38px;background:linear-gradient(#6aa8ff,#2568f2);border-radius:7px;box-shadow:0 1px 1px rgba(0,0,0,.15)"></div>
<div class="t" style="left:1559px;top:946.0px;font-size:26px;line-height:26px;color:#fff;">存储</div>
</div>
<div class="t" style="left:2764px;top:2074px;font-size:90px;font-weight:bold;color:#fff;text-shadow:4px 4px 0 #000,3px 3px 0 #000">头条</div>
<div class="t" style="left:2962px;top:2074px;font-size:92px;color:#fff;text-shadow:4px 4px 0 #000,3px 3px 0 #000">@薄荷堂堂主</div>
</body></html>
